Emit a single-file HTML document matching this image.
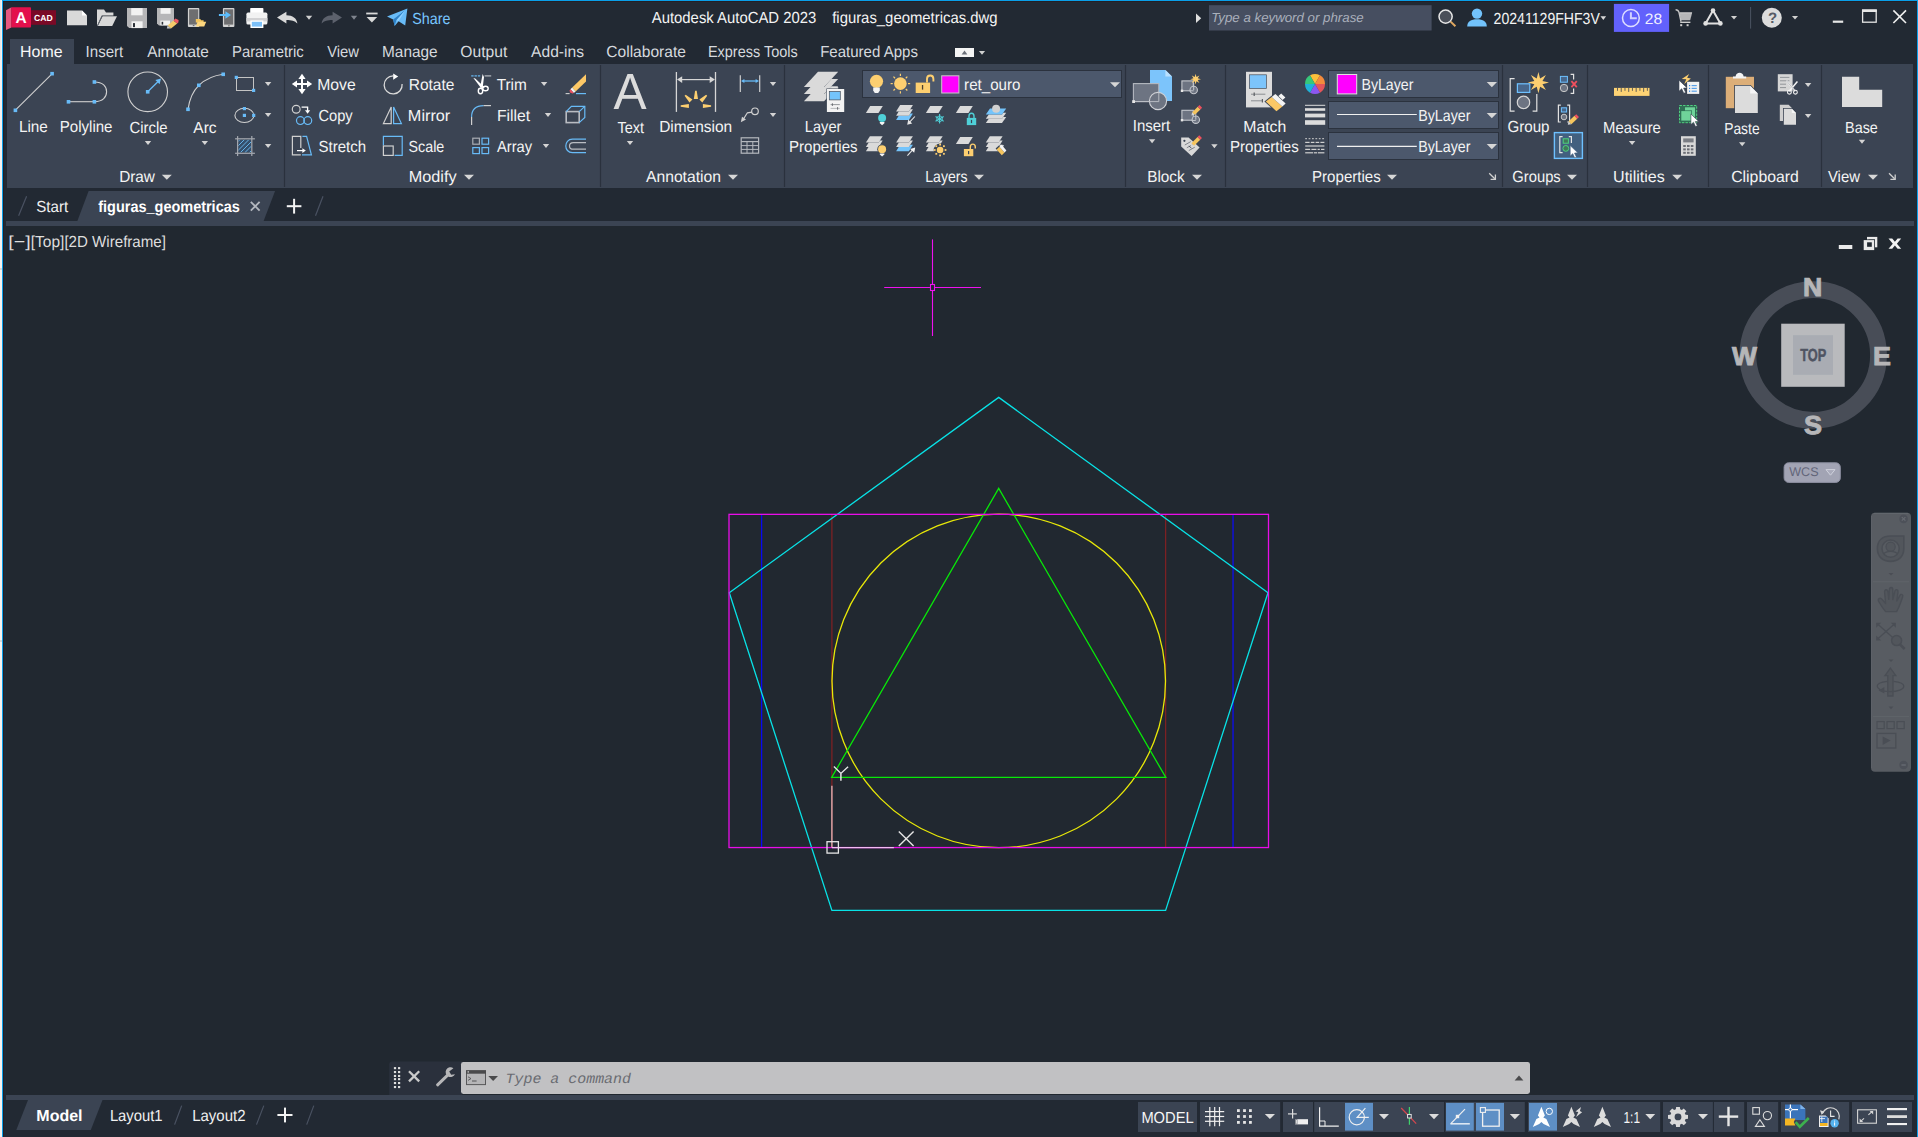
<!DOCTYPE html>
<html lang="en"><head><meta charset="utf-8"><title>Autodesk AutoCAD 2023 - figuras_geometricas.dwg</title>
<style>
html,body{margin:0;padding:0;background:#222933;overflow:hidden}
body{width:1918px;height:1137px}
svg{display:block;font-family:"Liberation Sans",sans-serif;text-rendering:geometricPrecision}
text{white-space:pre}
</style></head><body>
<svg width="1918" height="1137" viewBox="0 0 1918 1137">
<!-- s_frame -->
<rect x="0" y="0" width="1918" height="1137" fill="#222933"/>
<rect x="6" y="226" width="1908" height="869" fill="#212830"/>
<rect x="0" y="0" width="2" height="1137" fill="#f6f3f1"/>
<rect x="0" y="0" width="1" height="60" fill="#e8e8e8"/>
<rect x="0" y="268" width="2" height="2" fill="#d8d8d8"/>
<rect x="0" y="640" width="2" height="2" fill="#d8d8d8"/>
<rect x="2" y="0" width="1" height="1137" fill="#0a9fe8"/>
<rect x="3" y="1" width="1" height="1136" fill="#241f25"/>
<rect x="2" y="0" width="1916" height="1" fill="#0a9fe8"/>
<rect x="3" y="1" width="1914" height="1" fill="#241f25"/>
<rect x="1917" y="0" width="1" height="1137" fill="#0a9fe8"/>
<rect x="7" y="64" width="1906" height="124" fill="#3b4453"/>
<rect x="10" y="39" width="64" height="25" fill="#3b4453"/>
<rect x="6" y="221" width="1908" height="5" fill="#3b4453"/>
<path d="M88.6 191 L275.1 191 L263.6 221 L77.4 221 Z" fill="#3b4453"/>
<rect x="6" y="1095" width="1908" height="5" fill="#3b4453"/>
<path d="M28 1100 L102.5 1100 L90.8 1130 L16.3 1130 Z" fill="#3b4453"/>
<line x1="284.5" y1="65" x2="284.5" y2="187" stroke="#2a313d" stroke-width="1.2"/>
<line x1="600.5" y1="65" x2="600.5" y2="187" stroke="#2a313d" stroke-width="1.2"/>
<line x1="784.5" y1="65" x2="784.5" y2="187" stroke="#2a313d" stroke-width="1.2"/>
<line x1="1125.5" y1="65" x2="1125.5" y2="187" stroke="#2a313d" stroke-width="1.2"/>
<line x1="1225.5" y1="65" x2="1225.5" y2="187" stroke="#2a313d" stroke-width="1.2"/>
<line x1="1502.5" y1="65" x2="1502.5" y2="187" stroke="#2a313d" stroke-width="1.2"/>
<line x1="1587.5" y1="65" x2="1587.5" y2="187" stroke="#2a313d" stroke-width="1.2"/>
<line x1="1708.5" y1="65" x2="1708.5" y2="187" stroke="#2a313d" stroke-width="1.2"/>
<line x1="1821.5" y1="65" x2="1821.5" y2="187" stroke="#2a313d" stroke-width="1.2"/>
<!-- s_title -->
<path d="M6 10.2 L11.5 7.2 L11.5 27.4 L6 30 Z" fill="#e8587f"/>
<rect x="11.3" y="7.2" width="19.7" height="20.3" fill="#e3104c" rx="0.8"/>
<rect x="31" y="10.2" width="25" height="14.6" fill="#7a0926"/>
<text x="15.51" y="23.1" font-size="15.6" fill="#ffffff" textLength="11.19" lengthAdjust="spacingAndGlyphs" font-weight="bold">A</text>
<text x="34.05" y="20.7" font-size="8.8" fill="#ffffff" textLength="18.72" lengthAdjust="spacingAndGlyphs" font-weight="bold">CAD</text>
<path d="M67 10.4 L82 10.4 L87 15.4 L87 25.3 L67 25.3 Z" fill="#d9d9d9"/>
<path d="M82 10.4 L87 15.4 L82 15.4 Z" fill="#ffffff"/>
<path d="M97 9.6 L104 9.6 L106 12.4 L113.4 12.4 L113.4 15.6 L101.8 15.6 L97 26 Z" fill="#d9d9d9"/>
<path d="M102.6 16.2 L117 16.2 L112.2 26 L97.8 26 Z" fill="#d9d9d9"/>
<path d="M102 15.9 L97.4 26" fill="none" stroke="#6b6f78" stroke-width="0.9"/>
<path d="M127 8.1 L147 8.1 L147 28.1 L129.2 28.1 L127 25.9 Z" fill="#b6b6b8"/>
<rect x="131.2" y="8.1" width="11.4" height="7.2" fill="#f2f2f2"/>
<rect x="131.5" y="21.3" width="11.1" height="6.8" fill="#f2f2f2"/>
<rect x="133" y="23.1" width="2" height="4" fill="#2c3138"/>
<path d="M157 8.1 L174 8.1 L174 25.4 L159 25.4 L157 23.6 Z" fill="#b6b6b8"/>
<rect x="160.6" y="8.1" width="10" height="5.7" fill="#f2f2f2"/>
<rect x="160.4" y="20.6" width="9.6" height="4.8" fill="#f2f2f2"/>
<rect x="161.6" y="21.8" width="1.6" height="2.8" fill="#2c3138"/>
<path d="M173.4 20.4 L177.2 23.6 L171 28.4 L167.6 25.4 Z" fill="#f5cb6a"/>
<path d="M173.4 20.4 L175.4 18.6 L178.6 20 L178.4 22.6 L177.2 23.6 Z" fill="#ee5a66"/>
<path d="M167.6 25.4 L171 28.4 L166.8 28.6 Z" fill="#c8c8c8"/>
<rect x="187.9" y="8" width="11.4" height="18.9" fill="#d2d2d2" rx="0.9"/>
<rect x="189.1" y="9.3" width="9.1" height="15.3" fill="#6e6e70"/>
<rect x="192.8" y="25.2" width="1.6" height="0.9" fill="#555"/>
<path d="M195.8 18.9 L200.2 18.9 L201.2 20.2 L203.6 20.2 L203.6 22.4 L195.8 22.4 Z" fill="#f3c55c"/>
<path d="M197.6 21.8 L206.2 21.8 L204.2 26.6 L195.8 26.6 Z" fill="#fdd67e"/>
<rect x="222.9" y="8" width="11.5" height="18.9" fill="#d2d2d2" rx="0.9"/>
<rect x="224.1" y="9.3" width="9.1" height="15.3" fill="#6e6e70"/>
<rect x="228.2" y="25.4" width="1.4" height="0.9" fill="#444"/>
<path d="M218.9 14 L225.4 14 L225.4 11.3 L231 15 L225.4 18.7 L225.4 16 L218.9 16 Z" fill="#5cbcfb"/>
<rect x="250.2" y="7.9" width="13.2" height="5.7" fill="#ffffff" rx="0.8"/>
<rect x="246.4" y="12.6" width="21" height="12" fill="#f2f2f2" rx="1.6"/>
<rect x="246.4" y="18" width="21" height="3.4" fill="#d2d2d4"/>
<rect x="250.4" y="20.4" width="13" height="7.6" fill="#ffffff"/>
<rect x="251.8" y="21.8" width="10.2" height="4.8" fill="#7cc0f8"/>
<path d="M277 17.6 L286.4 11.8 L286.4 15.3 C292.6 15.3 296.8 18.3 297.4 23.6 C294.8 20.6 291.4 19.9 286.4 19.9 L286.4 23.5 Z" fill="#d9d9d9"/>
<path d="M305.8 15.8 L312.2 15.8 L309 19.8 Z" fill="#d0d0d0"/>
<path d="M342 17.6 L332.6 11.8 L332.6 15.3 C326.4 15.3 322.2 18.3 321.6 23.6 C324.2 20.6 327.6 19.9 332.6 19.9 L332.6 23.5 Z" fill="#5c616c"/>
<path d="M350.8 15.8 L357.2 15.8 L354 19.8 Z" fill="#7e838d"/>
<rect x="366.2" y="12.6" width="11.4" height="1.8" fill="#d9d9d9"/>
<path d="M366.6 17 L377.2 17 L371.9 22.4 Z" fill="#d9d9d9"/>
<path d="M387 16.4 L407.4 8.6 L405.2 25.6 L398.6 21.2 L394.6 26 L393.2 19.4 Z" fill="#68bbf7"/>
<path d="M393.2 19.4 L405.4 10 L396.4 20.2 L394.6 26 Z" fill="#2e7fc4"/>
<path d="M396.4 20.2 L405.4 10 L398.6 21.2 Z" fill="#8fd0ff"/>
<text x="412.25" y="24" font-size="16" fill="#78c6ff" textLength="38.19" lengthAdjust="spacingAndGlyphs">Share</text>
<text x="651.77" y="23" font-size="16" fill="#f4f4f4" textLength="164.48" lengthAdjust="spacingAndGlyphs">Autodesk AutoCAD 2023</text>
<text x="832.19" y="23" font-size="16" fill="#f4f4f4" textLength="165.37" lengthAdjust="spacingAndGlyphs">figuras_geometricas.dwg</text>
<path d="M1196 13.4 L1201.2 18.2 L1196 23 Z" fill="#e0e0e0"/>
<rect x="1209" y="5.2" width="222.6" height="25.3" fill="#464e60"/>
<text x="1211.22" y="22.4" font-size="13.2" fill="#aab0bc" textLength="152.47" lengthAdjust="spacingAndGlyphs" font-style="italic">Type a keyword or phrase</text>
<circle cx="1445.6" cy="16.6" r="6.6" fill="#4a4f59" stroke="#e6e6e6" stroke-width="1.5"/>
<line x1="1450.6" y1="21.6" x2="1455.4" y2="26.2" stroke="#e0a860" stroke-width="2"/>
<circle cx="1477" cy="13.6" r="5.2" fill="#72c2fb"/>
<path d="M1467.2 26.6 C1467.2 21.4 1471 19.2 1477 19.2 C1483 19.2 1486.8 21.4 1486.8 26.6 Z" fill="#72c2fb"/>
<text x="1493.6" y="24" font-size="16" fill="#f4f4f4" textLength="106.26" lengthAdjust="spacingAndGlyphs">20241129FHF3V</text>
<path d="M1600.5 16.3 L1606.1 16.3 L1603.3 19.9 Z" fill="#d9d9d9"/>
<rect x="1613.9" y="3.9" width="55.2" height="28" fill="#6261fc"/>
<circle cx="1630.9" cy="18" r="8.4" fill="none" stroke="#dedeff" stroke-width="1.5"/>
<path d="M1630.9 12.3 L1630.9 18.2 L1636.8 18.2" fill="none" stroke="#d2d2ff" stroke-width="2"/>
<text x="1644.71" y="24" font-size="15" fill="#f0f0ff" textLength="17.36" lengthAdjust="spacingAndGlyphs">28</text>
<path d="M1679.5 12.6 L1692.2 12.6 L1690.2 20.2 L1680.8 20.2 Z" fill="#b6b6b8"/>
<path d="M1679.5 12.9 L1692 12.9" fill="none" stroke="#cfcfcf" stroke-width="0.9"/>
<path d="M1675.6 9.8 C1677.6 9.8 1678.4 10.6 1679 12.4 L1681 21.6" fill="none" stroke="#c6c6c6" stroke-width="1.4"/>
<rect x="1680.2" y="21.6" width="10.2" height="1.4" fill="#cfcfcf"/>
<rect x="1680.2" y="24.2" width="2" height="2" fill="#cfcfcf"/>
<rect x="1686.6" y="24.2" width="2" height="2" fill="#cfcfcf"/>
<path d="M1713 10.6 L1705.6 23.6 L1720.4 23.6 L1713 10.6" fill="none" stroke="#e0e0e0" stroke-width="2" stroke-linejoin="round"/>
<circle cx="1713" cy="10.6" r="2.3" fill="#e0e0e0"/>
<circle cx="1705.6" cy="23.4" r="2.3" fill="#e0e0e0"/>
<circle cx="1720.4" cy="23.4" r="2.3" fill="#e0e0e0"/>
<path d="M1730.9 16 L1737.1 16 L1734 19.6 Z" fill="#d0d0d0"/>
<line x1="1750.6" y1="7" x2="1750.6" y2="28.6" stroke="#4a5262" stroke-width="1"/>
<circle cx="1771.8" cy="17.8" r="10" fill="#dcdcdc"/>
<text x="1768" y="23.2" font-size="15" fill="#565b66" font-weight="bold">?</text>
<path d="M1791.9 16 L1798.1 16 L1795 19.6 Z" fill="#d0d0d0"/>
<rect x="1832.8" y="20.6" width="10.4" height="2.2" fill="#e6e6e6"/>
<rect x="1862.6" y="10.2" width="13.6" height="12" fill="none" stroke="#e6e6e6" stroke-width="1.3"/>
<rect x="1862" y="9.4" width="14.8" height="2.6" fill="#e6e6e6"/>
<line x1="1893.4" y1="10.4" x2="1906" y2="23" stroke="#f0f0f0" stroke-width="1.6"/>
<line x1="1906" y1="10.4" x2="1893.4" y2="23" stroke="#f0f0f0" stroke-width="1.6"/>
<text x="20.1" y="57" font-size="16" fill="#f8f8f8" textLength="42.41" lengthAdjust="spacingAndGlyphs">Home</text>
<text x="85.61" y="57" font-size="16" fill="#d6d9de" textLength="37.7" lengthAdjust="spacingAndGlyphs">Insert</text>
<text x="147.37" y="57" font-size="16" fill="#d6d9de" textLength="61.51" lengthAdjust="spacingAndGlyphs">Annotate</text>
<text x="231.98" y="57" font-size="16" fill="#d6d9de" textLength="71.81" lengthAdjust="spacingAndGlyphs">Parametric</text>
<text x="327.14" y="57" font-size="16" fill="#d6d9de" textLength="31.83" lengthAdjust="spacingAndGlyphs">View</text>
<text x="382.04" y="57" font-size="16" fill="#d6d9de" textLength="55.65" lengthAdjust="spacingAndGlyphs">Manage</text>
<text x="460.36" y="57" font-size="16" fill="#d6d9de" textLength="46.96" lengthAdjust="spacingAndGlyphs">Output</text>
<text x="531.07" y="57" font-size="16" fill="#d6d9de" textLength="52.89" lengthAdjust="spacingAndGlyphs">Add-ins</text>
<text x="606.31" y="57" font-size="16" fill="#d6d9de" textLength="79.58" lengthAdjust="spacingAndGlyphs">Collaborate</text>
<text x="707.94" y="57" font-size="16" fill="#d6d9de" textLength="89.77" lengthAdjust="spacingAndGlyphs">Express Tools</text>
<text x="820.18" y="57" font-size="16" fill="#d6d9de" textLength="97.76" lengthAdjust="spacingAndGlyphs">Featured Apps</text>
<rect x="955" y="48" width="19" height="9" fill="#f4f4f4"/>
<path d="M961.6 54.6 L967.4 54.6 L964.5 50.6 Z" fill="#6a6f78"/>
<path d="M978.9 51 L985.1 51 L982 54.8 Z" fill="#d0d0d0"/>
<!-- s_ribbon_text -->
<rect x="862.5" y="70.5" width="259" height="27" fill="#4c586c" stroke="#2b323e" stroke-width="1"/>
<rect x="1328.5" y="70.5" width="170" height="27" fill="#4c586c" stroke="#2b323e" stroke-width="1"/>
<rect x="1328.5" y="101.5" width="170" height="27" fill="#4c586c" stroke="#2b323e" stroke-width="1"/>
<rect x="1328.5" y="132.5" width="170" height="27" fill="#4c586c" stroke="#2b323e" stroke-width="1"/>
<text x="18.94" y="132" font-size="16" fill="#f4f4f4" textLength="28.94" lengthAdjust="spacingAndGlyphs">Line</text>
<text x="59.77" y="132" font-size="16" fill="#f4f4f4" textLength="52.7" lengthAdjust="spacingAndGlyphs">Polyline</text>
<text x="129.44" y="133" font-size="16" fill="#f4f4f4" textLength="38.02" lengthAdjust="spacingAndGlyphs">Circle</text>
<text x="193.37" y="133" font-size="16" fill="#f4f4f4" textLength="23.24" lengthAdjust="spacingAndGlyphs">Arc</text>
<text x="119.14" y="182" font-size="16" fill="#f4f4f4" textLength="35.82" lengthAdjust="spacingAndGlyphs">Draw</text>
<text x="317.21" y="90" font-size="16" fill="#f4f4f4" textLength="38.49" lengthAdjust="spacingAndGlyphs">Move</text>
<text x="318.45" y="121" font-size="16" fill="#f4f4f4" textLength="34.27" lengthAdjust="spacingAndGlyphs">Copy</text>
<text x="318.52" y="152" font-size="16" fill="#f4f4f4" textLength="47.45" lengthAdjust="spacingAndGlyphs">Stretch</text>
<text x="408.73" y="90" font-size="16" fill="#f4f4f4" textLength="45.66" lengthAdjust="spacingAndGlyphs">Rotate</text>
<text x="407.87" y="121" font-size="16" fill="#f4f4f4" textLength="42.4" lengthAdjust="spacingAndGlyphs">Mirror</text>
<text x="408.55" y="152" font-size="16" fill="#f4f4f4" textLength="35.79" lengthAdjust="spacingAndGlyphs">Scale</text>
<text x="408.67" y="182" font-size="16" fill="#f4f4f4" textLength="47.86" lengthAdjust="spacingAndGlyphs">Modify</text>
<text x="496.66" y="90" font-size="16" fill="#f4f4f4" textLength="30.13" lengthAdjust="spacingAndGlyphs">Trim</text>
<text x="497.01" y="121" font-size="16" fill="#f4f4f4" textLength="33.1" lengthAdjust="spacingAndGlyphs">Fillet</text>
<text x="496.97" y="152" font-size="16" fill="#f4f4f4" textLength="35.16" lengthAdjust="spacingAndGlyphs">Array</text>
<text x="617.49" y="133" font-size="16" fill="#f4f4f4" textLength="26.61" lengthAdjust="spacingAndGlyphs">Text</text>
<text x="659.13" y="132" font-size="16" fill="#f4f4f4" textLength="73.07" lengthAdjust="spacingAndGlyphs">Dimension</text>
<text x="645.97" y="182" font-size="16" fill="#f4f4f4" textLength="75.05" lengthAdjust="spacingAndGlyphs">Annotation</text>
<text x="804.8" y="132" font-size="16" fill="#f4f4f4" textLength="36.64" lengthAdjust="spacingAndGlyphs">Layer</text>
<text x="788.96" y="152" font-size="16" fill="#f4f4f4" textLength="68.68" lengthAdjust="spacingAndGlyphs">Properties</text>
<text x="964.1" y="90" font-size="16" fill="#f4f4f4" textLength="56.34" lengthAdjust="spacingAndGlyphs">ret_ouro</text>
<text x="925.24" y="182" font-size="16" fill="#f4f4f4" textLength="42.26" lengthAdjust="spacingAndGlyphs">Layers</text>
<text x="1132.72" y="131" font-size="16" fill="#f4f4f4" textLength="37.49" lengthAdjust="spacingAndGlyphs">Insert</text>
<text x="1147.24" y="182" font-size="16" fill="#f4f4f4" textLength="37.43" lengthAdjust="spacingAndGlyphs">Block</text>
<text x="1243.31" y="132" font-size="16" fill="#f4f4f4" textLength="42.92" lengthAdjust="spacingAndGlyphs">Match</text>
<text x="1230.06" y="152" font-size="16" fill="#f4f4f4" textLength="68.68" lengthAdjust="spacingAndGlyphs">Properties</text>
<text x="1361.44" y="90" font-size="16" fill="#f4f4f4" textLength="52" lengthAdjust="spacingAndGlyphs">ByLayer</text>
<text x="1418.23" y="121" font-size="16" fill="#f4f4f4" textLength="52.2" lengthAdjust="spacingAndGlyphs">ByLayer</text>
<text x="1418.23" y="152" font-size="16" fill="#f4f4f4" textLength="52.2" lengthAdjust="spacingAndGlyphs">ByLayer</text>
<text x="1312.06" y="182" font-size="16" fill="#f4f4f4" textLength="68.68" lengthAdjust="spacingAndGlyphs">Properties</text>
<text x="1507.44" y="132" font-size="16" fill="#f4f4f4" textLength="42.1" lengthAdjust="spacingAndGlyphs">Group</text>
<text x="1512.36" y="182" font-size="16" fill="#f4f4f4" textLength="48.37" lengthAdjust="spacingAndGlyphs">Groups</text>
<text x="1603.08" y="133" font-size="16" fill="#f4f4f4" textLength="57.78" lengthAdjust="spacingAndGlyphs">Measure</text>
<text x="1613.06" y="182" font-size="16" fill="#f4f4f4" textLength="51.72" lengthAdjust="spacingAndGlyphs">Utilities</text>
<text x="1724.16" y="134" font-size="16" fill="#f4f4f4" textLength="35.45" lengthAdjust="spacingAndGlyphs">Paste</text>
<text x="1731.2" y="182" font-size="16" fill="#f4f4f4" textLength="67.62" lengthAdjust="spacingAndGlyphs">Clipboard</text>
<text x="1845.12" y="133" font-size="16" fill="#f4f4f4" textLength="32.72" lengthAdjust="spacingAndGlyphs">Base</text>
<text x="1827.94" y="182" font-size="16" fill="#f4f4f4" textLength="31.93" lengthAdjust="spacingAndGlyphs">View</text>
<path d="M161.8 174.8 L171.8 174.8 L166.8 179.8 Z" fill="#d6d6d6"/>
<path d="M464 174.8 L474 174.8 L469 179.8 Z" fill="#d6d6d6"/>
<path d="M728 174.8 L738 174.8 L733 179.8 Z" fill="#d6d6d6"/>
<path d="M974 174.8 L984 174.8 L979 179.8 Z" fill="#d6d6d6"/>
<path d="M1192 174.8 L1202 174.8 L1197 179.8 Z" fill="#d6d6d6"/>
<path d="M1387 174.8 L1397 174.8 L1392 179.8 Z" fill="#d6d6d6"/>
<path d="M1567 174.8 L1577 174.8 L1572 179.8 Z" fill="#d6d6d6"/>
<path d="M1672.2 174.8 L1682.2 174.8 L1677.2 179.8 Z" fill="#d6d6d6"/>
<path d="M1868 174.8 L1878 174.8 L1873 179.8 Z" fill="#d6d6d6"/>
<path d="M1489.2 173.2 L1494.8 178.8" fill="none" stroke="#d0d0d0" stroke-width="1.3"/>
<path d="M1495.4 174.6 L1495.4 179.4 L1490.6 179.4" fill="none" stroke="#d0d0d0" stroke-width="1.3"/>
<path d="M1889 173.2 L1894.6 178.8" fill="none" stroke="#d0d0d0" stroke-width="1.3"/>
<path d="M1895.2 174.6 L1895.2 179.4 L1890.4 179.4" fill="none" stroke="#d0d0d0" stroke-width="1.3"/>
<path d="M144.8 141 L151.2 141 L148 145 Z" fill="#d4d4d4"/>
<path d="M201.6 141 L208 141 L204.8 145 Z" fill="#d4d4d4"/>
<path d="M626.8 141 L633.2 141 L630 145 Z" fill="#d4d4d4"/>
<path d="M1148.9 139.2 L1155.3 139.2 L1152.1 143.2 Z" fill="#d4d4d4"/>
<path d="M1628.9 141 L1635.3 141 L1632.1 145 Z" fill="#d4d4d4"/>
<path d="M1739 142.2 L1745.4 142.2 L1742.2 146.2 Z" fill="#d4d4d4"/>
<path d="M1858.8 139.8 L1865.2 139.8 L1862 143.8 Z" fill="#d4d4d4"/>
<path d="M264.9 82 L271.3 82 L268.1 86 Z" fill="#d4d4d4"/>
<path d="M264.9 113 L271.3 113 L268.1 117 Z" fill="#d4d4d4"/>
<path d="M264.9 144 L271.3 144 L268.1 148 Z" fill="#d4d4d4"/>
<path d="M540.9 82 L547.3 82 L544.1 86 Z" fill="#d4d4d4"/>
<path d="M544.8 113 L551.2 113 L548 117 Z" fill="#d4d4d4"/>
<path d="M542.8 144 L549.2 144 L546 148 Z" fill="#d4d4d4"/>
<path d="M769.8 82 L776.2 82 L773 86 Z" fill="#d4d4d4"/>
<path d="M769.8 113 L776.2 113 L773 117 Z" fill="#d4d4d4"/>
<path d="M1211.2 144.2 L1217.6 144.2 L1214.4 148.2 Z" fill="#d4d4d4"/>
<path d="M1804.9 83 L1811.3 83 L1808.1 87 Z" fill="#d4d4d4"/>
<path d="M1804.9 114 L1811.3 114 L1808.1 118 Z" fill="#d4d4d4"/>
<path d="M1110 82.3 L1120 82.3 L1115 87.2 Z" fill="#d6d6d6"/>
<path d="M1486.7 81.9 L1497 81.9 L1491.85 87.3 Z" fill="#d6d6d6"/>
<path d="M1486.7 112.9 L1497 112.9 L1491.85 118.3 Z" fill="#d6d6d6"/>
<path d="M1486.7 143.9 L1497 143.9 L1491.85 149.3 Z" fill="#d6d6d6"/>
<rect x="941.7" y="75.8" width="17.2" height="17.2" fill="#ff00ff" stroke="#c8c8c8" stroke-width="1"/>
<rect x="1337.3" y="74.5" width="19.4" height="19.4" fill="#ff00ff" stroke="#e0e0e0" stroke-width="1"/>
<line x1="1337" y1="114.5" x2="1416.8" y2="114.5" stroke="#f0f0f0" stroke-width="1.2"/>
<line x1="1337" y1="146.4" x2="1416.8" y2="146.4" stroke="#f0f0f0" stroke-width="1.2"/>
<!-- s_draw -->
<line x1="15.4" y1="110.2" x2="52" y2="73.8" stroke="#d0d0d0" stroke-width="1.1"/>
<rect x="13.6" y="108.5" width="3.6" height="3.6" fill="#68bbf7"/>
<rect x="50.3" y="71.9" width="3.6" height="3.6" fill="#68bbf7"/>
<line x1="68.5" y1="101.7" x2="94.4" y2="101.7" stroke="#d0d0d0" stroke-width="1.1"/>
<path d="M94.4 82 C103 82 106.6 86.6 106.6 91.8 C106.6 97 103 101.7 94.4 101.7" fill="none" stroke="#d0d0d0" stroke-width="1.1"/>
<rect x="66.7" y="100" width="3.6" height="3.6" fill="#68bbf7"/>
<rect x="92.6" y="100" width="3.6" height="3.6" fill="#68bbf7"/>
<rect x="92.6" y="80.2" width="3.6" height="3.6" fill="#68bbf7"/>
<circle cx="147.7" cy="91.8" r="19.8" fill="none" stroke="#d0d0d0" stroke-width="1.1"/>
<line x1="147.7" y1="91.8" x2="158.4" y2="81.2" stroke="#68bbf7" stroke-width="1.3"/>
<path d="M161 78.6 L159.6 84.2 L155.4 80 Z" fill="#68bbf7"/>
<rect x="145.9" y="90" width="3.6" height="3.6" fill="#68bbf7"/>
<path d="M188 109.4 C189.6 97.6 193.6 90.4 198.8 85.3 C205 79.6 213 75.6 223.2 74.3" fill="none" stroke="#d0d0d0" stroke-width="1.1"/>
<rect x="186.2" y="107.5" width="3.6" height="3.6" fill="#68bbf7"/>
<rect x="197" y="83.5" width="3.6" height="3.6" fill="#68bbf7"/>
<rect x="221.4" y="72.5" width="3.6" height="3.6" fill="#68bbf7"/>
<rect x="236.5" y="77.5" width="17" height="13" fill="none" stroke="#c4c4c4" stroke-width="1"/>
<rect x="234.7" y="75.8" width="3.2" height="3.2" fill="#68bbf7"/>
<rect x="252" y="88.8" width="3.2" height="3.2" fill="#68bbf7"/>
<ellipse cx="244.4" cy="115.4" rx="9.5" ry="7.1" fill="none" stroke="#d0d0d0" stroke-width="1.1"/>
<rect x="242.8" y="107" width="3.2" height="3.2" fill="#68bbf7"/>
<rect x="242.8" y="113.8" width="3.2" height="3.2" fill="#68bbf7"/>
<rect x="252.1" y="113.8" width="3.2" height="3.2" fill="#68bbf7"/>
<clipPath id="hc"><rect x="238.4" y="139.6" width="12.6" height="12.9"/></clipPath>
<g clip-path="url(#hc)">
<rect x="238.4" y="139.6" width="12.6" height="12.9" fill="#344f6c"/>
<line x1="226.9" y1="152.6" x2="239.9" y2="139.6" stroke="#6cbdf6" stroke-width="0.9"/>
<line x1="231.4" y1="152.6" x2="244.4" y2="139.6" stroke="#6cbdf6" stroke-width="0.9"/>
<line x1="235.9" y1="152.6" x2="248.9" y2="139.6" stroke="#6cbdf6" stroke-width="0.9"/>
<line x1="240.4" y1="152.6" x2="253.4" y2="139.6" stroke="#6cbdf6" stroke-width="0.9"/>
<line x1="244.9" y1="152.6" x2="257.9" y2="139.6" stroke="#6cbdf6" stroke-width="0.9"/>
<line x1="249.4" y1="152.6" x2="262.4" y2="139.6" stroke="#6cbdf6" stroke-width="0.9"/>
</g>
<line x1="237.6" y1="136.1" x2="237.6" y2="156" stroke="#a3a7ae" stroke-width="1.25"/>
<line x1="251.8" y1="136.1" x2="251.8" y2="156" stroke="#a3a7ae" stroke-width="1.25"/>
<line x1="235.1" y1="138.8" x2="254.9" y2="138.8" stroke="#a3a7ae" stroke-width="1.25"/>
<line x1="235.1" y1="153.3" x2="254.9" y2="153.3" stroke="#a3a7ae" stroke-width="1.25"/>
<!-- s_modify -->
<rect x="301" y="77" width="2" height="14" fill="#ffffff"/>
<rect x="295" y="83" width="14" height="2" fill="#ffffff"/>
<path d="M302 73.8 L305.6 79 L298.4 79 Z" fill="#ffffff"/>
<path d="M302 94.2 L305.6 89 L298.4 89 Z" fill="#ffffff"/>
<path d="M291.8 84 L297 80.4 L297 87.6 Z" fill="#ffffff"/>
<path d="M312.2 84 L307 80.4 L307 87.6 Z" fill="#ffffff"/>
<circle cx="296.2" cy="109.3" r="3.9" fill="none" stroke="#d0d0d0" stroke-width="1.2"/>
<circle cx="300.4" cy="120.6" r="3.9" fill="none" stroke="#68bbf7" stroke-width="1.2"/>
<circle cx="307.8" cy="120.6" r="3.9" fill="none" stroke="#68bbf7" stroke-width="1.2"/>
<path d="M301.6 107.2 L307.6 107.2 L307.6 111.2" fill="none" stroke="#ffffff" stroke-width="1.3"/>
<path d="M305 110.2 L310.2 110.2 L307.6 113.8 Z" fill="#ffffff"/>
<path d="M300.8 154.9 L292.4 154.9 L292.4 136.4 L300.8 136.4 L300.8 148" fill="none" stroke="#d0d0d0" stroke-width="1.2"/>
<path d="M302.4 136.4 L306.6 136.4 L311.4 154.9 L302 154.9" fill="none" stroke="#68bbf7" stroke-width="1.2"/>
<line x1="297" y1="150.6" x2="303" y2="150.6" stroke="#ffffff" stroke-width="1.2"/>
<path d="M302.4 148.2 L305.8 150.6 L302.4 153 Z" fill="#ffffff"/>
<path d="M402.1 84 A9 9 0 1 1 393.2 75.9" fill="none" stroke="#dadada" stroke-width="1.3"/>
<path d="M393.2 73.6 L398.2 76.6 L393.2 79.8 Z" fill="#ffffff"/>
<path d="M391.2 107 L391.2 123.6 L383.4 123.6 Z" fill="none" stroke="#d0d0d0" stroke-width="1.2"/>
<path d="M393.6 107 L401.4 123.6 L393.6 123.6 Z" fill="none" stroke="#68bbf7" stroke-width="1.2"/>
<path d="M383.4 145.4 L383.4 136.4 L402.2 136.4 L402.2 155.4 L394.6 155.4" fill="none" stroke="#68bbf7" stroke-width="1.2"/>
<rect x="383.4" y="146" width="9.8" height="9.4" fill="none" stroke="#d0d0d0" stroke-width="1.2"/>
<line x1="471.2" y1="75.9" x2="473.6" y2="75.9" stroke="#68bbf7" stroke-width="1.2"/>
<line x1="474.5" y1="75.9" x2="476.9" y2="75.9" stroke="#68bbf7" stroke-width="1.2"/>
<line x1="477.8" y1="75.9" x2="480.2" y2="75.9" stroke="#68bbf7" stroke-width="1.2"/>
<line x1="484.6" y1="75.9" x2="491.2" y2="75.9" stroke="#b9bcc2" stroke-width="1.2"/>
<path d="M473.4 78 L475.2 78.4 L484.6 87.2 L482.4 88.6 L480.2 87 Z" fill="#ffffff"/>
<path d="M482.6 74 L484 77 L482.8 86.6 L480.4 88.2 L480.6 85 Z" fill="#ffffff"/>
<ellipse cx="480.5" cy="91" rx="2.2" ry="2.7" fill="none" stroke="#ffffff" stroke-width="1.4"/>
<ellipse cx="485.5" cy="88.5" rx="2.7" ry="2.2" fill="none" stroke="#ffffff" stroke-width="1.4"/>
<path d="M471.6 117 C471.6 110 475.4 105.6 483.6 105.6" fill="none" stroke="#68bbf7" stroke-width="1.2"/>
<line x1="483.6" y1="105.6" x2="491" y2="105.6" stroke="#d0d0d0" stroke-width="1.2"/>
<line x1="471.6" y1="117" x2="471.6" y2="125" stroke="#d0d0d0" stroke-width="1.2"/>
<rect x="472.8" y="138.2" width="6.6" height="6" fill="none" stroke="#a9adb4" stroke-width="1.2"/>
<rect x="482" y="138.2" width="6.6" height="6" fill="none" stroke="#68bbf7" stroke-width="1.2"/>
<rect x="472.8" y="147.6" width="6.6" height="6" fill="none" stroke="#68bbf7" stroke-width="1.2"/>
<rect x="482" y="147.6" width="6.6" height="6" fill="none" stroke="#68bbf7" stroke-width="1.2"/>
<path d="M586 74.2 L586 81.6 L575.6 91.4 L572.2 87.6 Z" fill="#fdc866"/>
<path d="M572.2 87.6 L575.6 91.4 L573.8 93 L570.4 89.2 Z" fill="#f2f2f2"/>
<path d="M570.4 89.2 L573.8 93 L572.6 93.6 L570 92.6 L569.6 90.4 Z" fill="#ee4f5e"/>
<line x1="565.6" y1="93.6" x2="569.6" y2="93.6" stroke="#d0d0d0" stroke-width="1.1"/>
<line x1="576" y1="93.6" x2="586" y2="93.6" stroke="#68bbf7" stroke-width="1.2"/>
<rect x="566.2" y="111.6" width="13" height="11" fill="none" stroke="#b9bcc2" stroke-width="1.6"/>
<path d="M566.2 111.6 L571.4 106.4 L584.8 106.4 L584.8 117.4 L579.2 122.6" fill="none" stroke="#68bbf7" stroke-width="1.2"/>
<line x1="579.2" y1="111.6" x2="584.8" y2="106.4" stroke="#68bbf7" stroke-width="1.2"/>
<path d="M586 139.2 L572.4 139.2 C563.6 139.2 563.6 152.6 572.4 152.6 L586 152.6" fill="none" stroke="#68bbf7" stroke-width="1.2"/>
<path d="M586 142.6 L573.4 142.6 C568.2 142.6 568.2 149.2 573.4 149.2 L586 149.2" fill="none" stroke="#b9bcc2" stroke-width="1.2"/>
<!-- s_annot -->
<text x="613.6" y="109.2" font-size="51" fill="#dcdcdc" textLength="33.09" lengthAdjust="spacingAndGlyphs">A</text>
<line x1="676.4" y1="72" x2="676.4" y2="111.9" stroke="#d6d6d6" stroke-width="1.3"/>
<line x1="715.5" y1="72" x2="715.5" y2="111.9" stroke="#d6d6d6" stroke-width="1.3"/>
<line x1="680" y1="79.6" x2="712" y2="79.6" stroke="#d6d6d6" stroke-width="1.2"/>
<path d="M677 79.6 L682.2 76.3 L682.2 82.9 Z" fill="#d6d6d6"/>
<path d="M714.9 79.6 L709.7 76.3 L709.7 82.9 Z" fill="#d6d6d6"/>
<path d="M702.9 108.1 L711.1 106.8 L711.1 105.2 L702.9 103.9 Z" fill="#fdcf70"/>
<path d="M702.33 102.54 L707.21 95.82 L706.08 94.69 L699.36 99.57 Z" fill="#fdcf70"/>
<path d="M698 99 L696.7 90.8 L695.1 90.8 L693.8 99 Z" fill="#fdcf70"/>
<path d="M692.44 99.57 L685.72 94.69 L684.59 95.82 L689.47 102.54 Z" fill="#fdcf70"/>
<path d="M688.9 103.9 L680.7 105.2 L680.7 106.8 L688.9 108.1 Z" fill="#fdcf70"/>
<line x1="740.3" y1="75.2" x2="740.3" y2="92" stroke="#d0d0d0" stroke-width="1.2"/>
<line x1="759.7" y1="75.2" x2="759.7" y2="92" stroke="#d0d0d0" stroke-width="1.2"/>
<line x1="743" y1="81" x2="757" y2="81" stroke="#68bbf7" stroke-width="1.3"/>
<path d="M741 81 L744.4 79 L744.4 83 Z" fill="#68bbf7"/>
<path d="M759 81 L755.6 79 L755.6 83 Z" fill="#68bbf7"/>
<circle cx="755" cy="111.3" r="3.3" fill="none" stroke="#d0d0d0" stroke-width="1.2"/>
<path d="M752 112.2 L747.4 112.8 L743 119.8" fill="none" stroke="#d0d0d0" stroke-width="1.2"/>
<path d="M740.8 122.2 L742 116.8 L746 119.6 Z" fill="#d0d0d0"/>
<rect x="741.2" y="137.8" width="17.4" height="15.4" fill="none" stroke="#b5b8be" stroke-width="1.2"/>
<line x1="741.2" y1="141.6" x2="758.6" y2="141.6" stroke="#b5b8be" stroke-width="1.2"/>
<line x1="741.2" y1="145.6" x2="758.6" y2="145.6" stroke="#b5b8be" stroke-width="1"/>
<line x1="741.2" y1="149.4" x2="758.6" y2="149.4" stroke="#b5b8be" stroke-width="1"/>
<line x1="747" y1="141.6" x2="747" y2="153.2" stroke="#b5b8be" stroke-width="1"/>
<line x1="752.8" y1="141.6" x2="752.8" y2="153.2" stroke="#b5b8be" stroke-width="1"/>
<!-- s_layers -->
<path d="M818 84.9 L838.6 84.9 L824.3 101.2 L803.7 101.2 Z" fill="#3b4453"/>
<path d="M818 86.2 L838.2 86.2 L824.1 101.2 L803.9 101.2 Z" fill="#dadada"/>
<path d="M818 77.7 L838.6 77.7 L824.3 94 L803.7 94 Z" fill="#3b4453"/>
<path d="M818 79 L838.2 79 L824.1 94 L803.9 94 Z" fill="#dadada"/>
<path d="M818 70.5 L838.6 70.5 L824.3 87.1 L803.7 87.1 Z" fill="#3b4453"/>
<path d="M818 71.8 L838.2 71.8 L824.1 87.1 L803.9 87.1 Z" fill="#dadada"/>
<rect x="831.8" y="87.1" width="6.4" height="2.3" fill="#e4e4e4"/>
<rect x="826.4" y="88.5" width="18.2" height="23.9" fill="#3b4453"/>
<rect x="826.9" y="89" width="17.3" height="23" fill="#f3f3f3"/>
<rect x="829.3" y="91.4" width="11" height="8.5" fill="#74c4fb" stroke="#4a4f58" stroke-width="0.7"/>
<line x1="830.6" y1="104.6" x2="839.8" y2="104.6" stroke="#8a8d92" stroke-width="0.9"/>
<line x1="832.4" y1="103.3" x2="832.4" y2="105.9" stroke="#6a6d72" stroke-width="1"/>
<line x1="830.6" y1="108.4" x2="839.8" y2="108.4" stroke="#b0b2b6" stroke-width="0.9"/>
<line x1="837.6" y1="107.1" x2="837.6" y2="109.7" stroke="#6a6d72" stroke-width="1"/>
<circle cx="876.5" cy="81.3" r="6.6" fill="#fdcf70"/>
<path d="M873.2 87.6 L879.8 87.6 L879.8 90.6 L878.2 93 L874.8 93 L873.2 90.6 Z" fill="#f4f4f4"/>
<circle cx="900.4" cy="83.6" r="6.3" fill="#fdcf70"/>
<line x1="908" y1="83.6" x2="910.2" y2="83.6" stroke="#fdcf70" stroke-width="1.2"/>
<line x1="905.77" y1="88.97" x2="907.33" y2="90.53" stroke="#fdcf70" stroke-width="1.2"/>
<line x1="900.4" y1="91.2" x2="900.4" y2="93.4" stroke="#fdcf70" stroke-width="1.2"/>
<line x1="895.03" y1="88.97" x2="893.47" y2="90.53" stroke="#fdcf70" stroke-width="1.2"/>
<line x1="892.8" y1="83.6" x2="890.6" y2="83.6" stroke="#fdcf70" stroke-width="1.2"/>
<line x1="895.03" y1="78.23" x2="893.47" y2="76.67" stroke="#fdcf70" stroke-width="1.2"/>
<line x1="900.4" y1="76" x2="900.4" y2="73.8" stroke="#fdcf70" stroke-width="1.2"/>
<line x1="905.77" y1="78.23" x2="907.33" y2="76.67" stroke="#fdcf70" stroke-width="1.2"/>
<rect x="915.7" y="82.6" width="14.4" height="10.4" fill="#fdcf70"/>
<path d="M927 82.6 L927 79 C927 74.4 933.4 74.4 933.4 79 L933.4 81.6" fill="none" stroke="#fdcf70" stroke-width="1.9"/>
<rect x="921.9" y="85" width="1.3" height="4.6" fill="#4a4030"/>
<path d="M870.2 106.1 L882.8 106.1 L878.5 113 L865.9 113 Z" fill="#dadada"/>
<circle cx="882.1" cy="117.9" r="4" fill="#4fd0d8"/>
<path d="M879.8 122.1 L884.4 122.1 L884.4 123.3 L882.1 125.3 L879.8 123.3 Z" fill="#f4f4f4"/>
<path d="M899.8 112.3 L913.3 112.3 L908.9 120 L896.1 120 Z" fill="#3b4453"/>
<path d="M900.1 113.6 L912.9 113.6 L908.9 120 L896.1 120 Z" fill="#74c4fb"/>
<path d="M899.8 108 L913.3 108 L908.9 115.7 L896.1 115.7 Z" fill="#3b4453"/>
<path d="M900.1 109.3 L912.9 109.3 L908.9 115.7 L896.1 115.7 Z" fill="#dadada"/>
<path d="M899.8 103.7 L913.3 103.7 L908.9 111.4 L896.1 111.4 Z" fill="#3b4453"/>
<path d="M900.1 105 L912.9 105 L908.9 111.4 L896.1 111.4 Z" fill="#dadada"/>
<line x1="914.9" y1="116.5" x2="909.6" y2="122.2" stroke="#e6e6e6" stroke-width="1.1"/>
<path d="M907.2 124.8 L908.2 119.6 L912.2 123.4 Z" fill="#e6e6e6"/>
<path d="M930.2 106.1 L942.8 106.1 L938.5 113 L925.9 113 Z" fill="#dadada"/>
<line x1="939.6" y1="123.5" x2="939.6" y2="114.1" stroke="#4fd0d8" stroke-width="1.1"/>
<line x1="935.53" y1="121.15" x2="943.67" y2="116.45" stroke="#4fd0d8" stroke-width="1.1"/>
<line x1="935.53" y1="116.45" x2="943.67" y2="121.15" stroke="#4fd0d8" stroke-width="1.1"/>
<line x1="942.28" y1="120.35" x2="939.6" y2="121.9" stroke="#4fd0d8" stroke-width="0.9"/>
<line x1="939.6" y1="121.9" x2="936.92" y2="120.35" stroke="#4fd0d8" stroke-width="0.9"/>
<line x1="936.92" y1="120.35" x2="936.92" y2="117.25" stroke="#4fd0d8" stroke-width="0.9"/>
<line x1="936.92" y1="117.25" x2="939.6" y2="115.7" stroke="#4fd0d8" stroke-width="0.9"/>
<line x1="939.6" y1="115.7" x2="942.28" y2="117.25" stroke="#4fd0d8" stroke-width="0.9"/>
<line x1="942.28" y1="117.25" x2="942.28" y2="120.35" stroke="#4fd0d8" stroke-width="0.9"/>
<path d="M960.2 106.1 L972.8 106.1 L968.5 113 L955.9 113 Z" fill="#dadada"/>
<rect x="966.8" y="117.9" width="9.4" height="7.2" fill="#4fd0d8"/>
<path d="M969 117.9 L969 116.1 C969 112.3 974 112.3 974 116.1 L974 117.9" fill="none" stroke="#4fd0d8" stroke-width="1.4"/>
<rect x="970.9" y="119.9" width="1.2" height="3.2" fill="#3b4453"/>
<path d="M989.7 115.7 L1006.6 115.7 L1002 123 L985.8 123 Z" fill="#3b4453"/>
<path d="M990 117 L1006.2 117 L1002 123 L985.8 123 Z" fill="#dadada"/>
<path d="M989.7 111.5 L1006.6 111.5 L1002 118.8 L985.8 118.8 Z" fill="#3b4453"/>
<path d="M990 112.8 L1006.2 112.8 L1002 118.8 L985.8 118.8 Z" fill="#dadada"/>
<path d="M989.7 107.3 L1006.6 107.3 L1002 114.6 L985.8 114.6 Z" fill="#3b4453"/>
<path d="M990 108.6 L1006.2 108.6 L1002 114.6 L985.8 114.6 Z" fill="#74c4fb"/>
<circle cx="996.1" cy="108.7" r="4" fill="#d0d0d0"/>
<path d="M869.6 143.5 L883.1 143.5 L878.7 151.2 L865.9 151.2 Z" fill="#3b4453"/>
<path d="M869.9 144.8 L882.7 144.8 L878.7 151.2 L865.9 151.2 Z" fill="#dadada"/>
<path d="M869.6 139.2 L883.1 139.2 L878.7 146.9 L865.9 146.9 Z" fill="#3b4453"/>
<path d="M869.9 140.5 L882.7 140.5 L878.7 146.9 L865.9 146.9 Z" fill="#dadada"/>
<path d="M869.6 134.9 L883.1 134.9 L878.7 142.6 L865.9 142.6 Z" fill="#3b4453"/>
<path d="M869.9 136.2 L882.7 136.2 L878.7 142.6 L865.9 142.6 Z" fill="#dadada"/>
<circle cx="882.1" cy="149.2" r="4.8" fill="#3b4453"/>
<circle cx="882.1" cy="149.2" r="4" fill="#fdcf70"/>
<path d="M879.8 153.4 L884.4 153.4 L884.4 154.6 L882.1 156.6 L879.8 154.6 Z" fill="#f4f4f4"/>
<path d="M899.8 143.5 L913.3 143.5 L908.9 151.2 L896.1 151.2 Z" fill="#3b4453"/>
<path d="M900.1 144.8 L912.9 144.8 L908.9 151.2 L896.1 151.2 Z" fill="#74c4fb"/>
<path d="M899.8 139.2 L913.3 139.2 L908.9 146.9 L896.1 146.9 Z" fill="#3b4453"/>
<path d="M900.1 140.5 L912.9 140.5 L908.9 146.9 L896.1 146.9 Z" fill="#dadada"/>
<path d="M899.8 134.9 L913.3 134.9 L908.9 142.6 L896.1 142.6 Z" fill="#3b4453"/>
<path d="M900.1 136.2 L912.9 136.2 L908.9 142.6 L896.1 142.6 Z" fill="#dadada"/>
<line x1="907.4" y1="155.6" x2="912.4" y2="150.2" stroke="#e6e6e6" stroke-width="1.1"/>
<path d="M915.2 147.6 L914.2 152.8 L910.2 149 Z" fill="#f4f4f4"/>
<path d="M929.6 143.5 L943.1 143.5 L938.7 151.2 L925.9 151.2 Z" fill="#3b4453"/>
<path d="M929.9 144.8 L942.7 144.8 L938.7 151.2 L925.9 151.2 Z" fill="#dadada"/>
<path d="M929.6 139.2 L943.1 139.2 L938.7 146.9 L925.9 146.9 Z" fill="#3b4453"/>
<path d="M929.9 140.5 L942.7 140.5 L938.7 146.9 L925.9 146.9 Z" fill="#dadada"/>
<path d="M929.6 134.9 L943.1 134.9 L938.7 142.6 L925.9 142.6 Z" fill="#3b4453"/>
<path d="M929.9 136.2 L942.7 136.2 L938.7 142.6 L925.9 142.6 Z" fill="#dadada"/>
<circle cx="940.1" cy="150" r="6.4" fill="#3b4453"/>
<circle cx="940.1" cy="150" r="3.3" fill="#fdcf70"/>
<rect x="944.6" y="149.1" width="1.8" height="1.8" fill="#fdcf70"/>
<rect x="943.02" y="152.92" width="1.8" height="1.8" fill="#fdcf70"/>
<rect x="939.2" y="154.5" width="1.8" height="1.8" fill="#fdcf70"/>
<rect x="935.38" y="152.92" width="1.8" height="1.8" fill="#fdcf70"/>
<rect x="933.8" y="149.1" width="1.8" height="1.8" fill="#fdcf70"/>
<rect x="935.38" y="145.28" width="1.8" height="1.8" fill="#fdcf70"/>
<rect x="939.2" y="143.7" width="1.8" height="1.8" fill="#fdcf70"/>
<rect x="943.02" y="145.28" width="1.8" height="1.8" fill="#fdcf70"/>
<path d="M960.2 137 L972.8 137 L968.5 143.9 L955.9 143.9 Z" fill="#dadada"/>
<rect x="963.9" y="149" width="9.4" height="7.2" fill="#fdcf70"/>
<path d="M970.3 149 L970.3 147 C970.3 143.2 975.3 143.2 975.3 147 L975.3 148.4" fill="none" stroke="#fdcf70" stroke-width="1.4"/>
<rect x="968" y="151" width="1.2" height="3.2" fill="#3b4453"/>
<path d="M989.5 143.5 L1003 143.5 L998.6 151.2 L985.8 151.2 Z" fill="#3b4453"/>
<path d="M989.8 144.8 L1002.6 144.8 L998.6 151.2 L985.8 151.2 Z" fill="#dadada"/>
<path d="M989.5 139.2 L1003 139.2 L998.6 146.9 L985.8 146.9 Z" fill="#3b4453"/>
<path d="M989.8 140.5 L1002.6 140.5 L998.6 146.9 L985.8 146.9 Z" fill="#dadada"/>
<path d="M989.5 134.9 L1003 134.9 L998.6 142.6 L985.8 142.6 Z" fill="#3b4453"/>
<path d="M989.8 136.2 L1002.6 136.2 L998.6 142.6 L985.8 142.6 Z" fill="#dadada"/>
<path d="M995.6 148.4 L999.2 145.2 L1006 152.6 L1002.4 155.8 Z" fill="#3b4453"/>
<path d="M996.6 149.4 L999.4 146.8 L1004.6 152.6 L1001.8 155.2 Z" fill="#f5c55e"/>
<path d="M999.4 146.8 L1001.6 144.8 L1006.4 150.4 L1004.6 152.6 Z" fill="#f4f4f4"/>
<line x1="1001.4" y1="147.4" x2="1003.4" y2="145.2" stroke="#f4f4f4" stroke-width="1.4"/>
<!-- s_block -->
<path d="M1150 70 L1165.4 70 L1172 76.6 L1172 101 L1150 101 Z" fill="#7cc4fb"/>
<path d="M1165.4 70 L1172 76.6 L1165.4 76.6 Z" fill="#b9e0fd"/>
<rect x="1133.4" y="83.6" width="25.4" height="18" fill="#6d7482" stroke="#b4b8c0" stroke-width="1.1"/>
<circle cx="1158" cy="101" r="8.6" fill="#6d7482" stroke="#cfd1d6" stroke-width="1.1"/>
<path d="M1133.4 101.6 L1158.8 101.6 L1158.8 92.4" fill="none" stroke="#bfc2c8" stroke-width="0.9"/>
<rect x="1132.2" y="100.2" width="2.8" height="2.8" fill="#e6e6e6"/>
<rect x="1181.9" y="80.9" width="11.4" height="9.9" fill="#6d7482" stroke="#c4c7cd" stroke-width="1.1"/>
<circle cx="1193.7" cy="90" r="3.7" fill="#6d7482" stroke="#c4c7cd" stroke-width="1.1"/>
<line x1="1193.7" y1="83" x2="1193.7" y2="90" stroke="#c4c7cd" stroke-width="1"/>
<line x1="1189.7" y1="90.8" x2="1193.7" y2="90.8" stroke="#c4c7cd" stroke-width="0.9"/>
<rect x="1180.8" y="89.6" width="2.4" height="2.4" fill="#e6e6e6"/>
<path d="M1195.6 73.8 L1196.48 77.08 L1199.42 75.38 L1197.72 78.32 L1201 79.2 L1197.72 80.08 L1199.42 83.02 L1196.48 81.32 L1195.6 84.6 L1194.72 81.32 L1191.78 83.02 L1193.48 80.08 L1190.2 79.2 L1193.48 78.32 L1191.78 75.38 L1194.72 77.08 Z" fill="#fdcf70"/>
<rect x="1181.9" y="110.3" width="11.4" height="9.9" fill="#6d7482" stroke="#c4c7cd" stroke-width="1.1"/>
<circle cx="1195.8" cy="119.7" r="3.7" fill="#6d7482" stroke="#c4c7cd" stroke-width="1.1"/>
<line x1="1195.8" y1="112.7" x2="1195.8" y2="119.7" stroke="#c4c7cd" stroke-width="1"/>
<line x1="1191.8" y1="120.5" x2="1195.8" y2="120.5" stroke="#c4c7cd" stroke-width="0.9"/>
<rect x="1180.8" y="119" width="2.4" height="2.4" fill="#e6e6e6"/>
<path d="M1191.4 115.6 L1194.87 114.86 L1192.22 112.14 Z" fill="#d6d6d6"/>
<path d="M1194.87 114.86 L1200.41 109.44 L1197.76 106.72 L1192.22 112.14 Z" fill="#f5c55e"/>
<path d="M1200.41 109.44 L1202.13 107.76 L1199.47 105.04 L1197.76 106.72 Z" fill="#ee4f5e"/>
<path d="M1181.2 137.6 L1188.6 137.6 L1199.6 147.6 L1191.6 156 L1181.2 146.4 Z" fill="#d9d9d9"/>
<circle cx="1184.4" cy="140.8" r="1.1" fill="#3b4453"/>
<line x1="1184.8" y1="145" x2="1190.8" y2="141.6" stroke="#6b7078" stroke-width="0.8"/>
<line x1="1186.8" y1="147.8" x2="1192.8" y2="144.4" stroke="#6b7078" stroke-width="0.8"/>
<line x1="1188.8" y1="150.6" x2="1194.8" y2="147.2" stroke="#6b7078" stroke-width="0.8"/>
<path d="M1190.6 146.6 L1194.06 145.82 L1191.38 143.14 Z" fill="#d6d6d6"/>
<path d="M1194.06 145.82 L1200.25 139.64 L1197.56 136.95 L1191.38 143.14 Z" fill="#f5c55e"/>
<path d="M1200.25 139.64 L1201.94 137.94 L1199.26 135.26 L1197.56 136.95 Z" fill="#ee4f5e"/>
<line x1="1188.8" y1="146" x2="1191.4" y2="148" stroke="#4a4f58" stroke-width="0.9"/>
<!-- s_props -->
<rect x="1246" y="71.8" width="26" height="35.6" fill="#dcdcdc"/>
<rect x="1249.4" y="74.8" width="17" height="13.6" fill="#7cc4fb" stroke="#4a4f58" stroke-width="0.7"/>
<line x1="1251" y1="94.2" x2="1265.4" y2="94.2" stroke="#8a8d92" stroke-width="1"/>
<line x1="1254.2" y1="92.4" x2="1254.2" y2="96" stroke="#5a5d62" stroke-width="1.2"/>
<line x1="1251" y1="100.8" x2="1263" y2="100.8" stroke="#8a8d92" stroke-width="1"/>
<line x1="1262.4" y1="99" x2="1262.4" y2="102.6" stroke="#5a5d62" stroke-width="1.2"/>
<path d="M1264.4 101.6 L1271.8 95.6 L1284.6 106.2 L1276.6 112.2 Z" fill="#3b4453"/>
<path d="M1265.8 101.4 L1271.6 97 L1282.4 106.4 L1276.4 111.2 Z" fill="#fbc866"/>
<path d="M1271.6 97 L1275.4 94 L1285.6 103.6 L1282.4 106.4 Z" fill="#f4f4f4"/>
<path d="M1278.4 96 L1281.2 93.6 L1285.4 97.6 L1282.6 100 Z" fill="#f4f4f4"/>
<path d="M1315 84 L1310 75.34 A10 10 0 0 1 1320 75.34 Z" fill="#fbbf3a"/>
<path d="M1315 84 L1320 75.34 A10 10 0 0 1 1325 84 Z" fill="#f58b3c"/>
<path d="M1315 84 L1325 84 A10 10 0 0 1 1320 92.66 Z" fill="#e4555a"/>
<path d="M1315 84 L1320 92.66 A10 10 0 0 1 1310 92.66 Z" fill="#8c57f0"/>
<path d="M1315 84 L1310 92.66 A10 10 0 0 1 1305 84 Z" fill="#1fb2d8"/>
<path d="M1315 84 L1305 84 A10 10 0 0 1 1310 75.34 Z" fill="#37c77a"/>
<rect x="1305" y="104.8" width="20.2" height="1" fill="#dcdcdc"/>
<rect x="1305" y="108.2" width="20.2" height="2.6" fill="#dcdcdc"/>
<rect x="1305" y="113.6" width="20.2" height="3.8" fill="#dcdcdc"/>
<rect x="1305" y="120.2" width="20.2" height="4.6" fill="#dcdcdc"/>
<rect x="1305.2" y="138.2" width="1.8" height="1" fill="#d0d0d0"/>
<rect x="1308.6" y="138.2" width="1.8" height="1" fill="#d0d0d0"/>
<rect x="1312" y="138.2" width="1.8" height="1" fill="#d0d0d0"/>
<rect x="1315.4" y="138.2" width="1.8" height="1" fill="#d0d0d0"/>
<rect x="1318.8" y="138.2" width="1.8" height="1" fill="#d0d0d0"/>
<rect x="1322.2" y="138.2" width="1.8" height="1" fill="#d0d0d0"/>
<rect x="1305.2" y="141.8" width="4.4" height="1.2" fill="#d0d0d0"/>
<rect x="1310.8" y="141.8" width="3.6" height="1.2" fill="#d0d0d0"/>
<rect x="1315.6" y="141.8" width="3.6" height="1.2" fill="#d0d0d0"/>
<rect x="1320.4" y="141.8" width="4" height="1.2" fill="#d0d0d0"/>
<rect x="1305.2" y="145.4" width="19.2" height="1.2" fill="#d0d0d0"/>
<rect x="1305.2" y="148.8" width="5" height="1.2" fill="#d0d0d0"/>
<rect x="1311.4" y="148.8" width="5" height="1.2" fill="#d0d0d0"/>
<rect x="1317.6" y="148.8" width="2.2" height="1.2" fill="#d0d0d0"/>
<rect x="1321" y="148.8" width="3.4" height="1.2" fill="#d0d0d0"/>
<rect x="1305.2" y="152.2" width="8" height="1.2" fill="#d0d0d0"/>
<rect x="1314" y="152.2" width="3" height="1.2" fill="#d0d0d0"/>
<rect x="1317.8" y="152.2" width="6.6" height="1.2" fill="#d0d0d0"/>
<!-- s_groups -->
<path d="M1514.6 78.6 L1510.2 78.6 L1510.2 111.2 L1514.6 111.2" fill="none" stroke="#e2e2e2" stroke-width="1.2"/>
<path d="M1532.6 111.2 L1536.8 111.2 L1536.8 94" fill="none" stroke="#e2e2e2" stroke-width="1.2"/>
<rect x="1517.4" y="83.8" width="12.4" height="8.6" fill="#48678c" stroke="#6ec1ff" stroke-width="1.2"/>
<circle cx="1523.5" cy="102.4" r="6.2" fill="#6d7482" stroke="#d6d6d6" stroke-width="1.2"/>
<path d="M1538.4 72 L1540.08 78.53 L1545.9 75.1 L1542.47 80.92 L1549 82.6 L1542.47 84.28 L1545.9 90.1 L1540.08 86.67 L1538.4 93.2 L1536.72 86.67 L1530.9 90.1 L1534.33 84.28 L1527.8 82.6 L1534.33 80.92 L1530.9 75.1 L1536.72 78.53 Z" fill="#fdcf70"/>
<rect x="1560.4" y="76.4" width="7" height="5.8" fill="#48678c" stroke="#6ec1ff" stroke-width="1"/>
<circle cx="1564" cy="88" r="3.7" fill="#6d7482" stroke="#c9c9c9" stroke-width="1"/>
<path d="M1570.6 74.4 L1573.6 74.4 L1573.6 79.6" fill="none" stroke="#e2e2e2" stroke-width="1.2"/>
<path d="M1573.6 88.6 L1573.6 93.4 L1570.6 93.4" fill="none" stroke="#e2e2e2" stroke-width="1.2"/>
<line x1="1571.4" y1="81.2" x2="1576.8" y2="87.2" stroke="#f0505e" stroke-width="1.8"/>
<line x1="1576.8" y1="81.2" x2="1571.4" y2="87.2" stroke="#f0505e" stroke-width="1.8"/>
<path d="M1560.8 105.2 L1558.4 105.2 L1558.4 122 L1560.8 122" fill="none" stroke="#e2e2e2" stroke-width="1.2"/>
<path d="M1567.2 105.2 L1569.6 105.2 L1569.6 122 L1567.2 122" fill="none" stroke="#e2e2e2" stroke-width="1.2"/>
<rect x="1561.4" y="107.8" width="5.2" height="4.2" fill="#48678c" stroke="#6ec1ff" stroke-width="1"/>
<circle cx="1564" cy="117" r="2.8" fill="#6d7482" stroke="#c9c9c9" stroke-width="1"/>
<path d="M1567.8 124.8 L1571.36 124.2 L1568.62 121.29 Z" fill="#d6d6d6"/>
<path d="M1571.36 124.2 L1577.22 118.7 L1574.48 115.78 L1568.62 121.29 Z" fill="#f5c55e"/>
<path d="M1577.22 118.7 L1578.97 117.06 L1576.23 114.14 L1574.48 115.78 Z" fill="#ee4f5e"/>
<rect x="1554.4" y="132.6" width="28" height="25.8" fill="#42607f" stroke="#6ec1ff" stroke-width="1.4"/>
<path d="M1562.6 136.6 L1559.8 136.6 L1559.8 152.6 L1562.6 152.6" fill="none" stroke="#e2e2e2" stroke-width="1.2"/>
<path d="M1568.8 136.6 L1571.4 136.6 L1571.4 143" fill="none" stroke="#e2e2e2" stroke-width="1.2"/>
<rect x="1563.2" y="138.8" width="5.2" height="4.4" fill="#3f7a5a" stroke="#4fd07f" stroke-width="1"/>
<circle cx="1565.8" cy="148.4" r="2.9" fill="#3f7a5a" stroke="#4fd07f" stroke-width="1"/>
<path d="M1570.2 145.6 L1570.2 155.99 L1572.75 153.64 L1574.71 157.95 L1576.47 157.16 L1574.51 153.05 L1577.84 152.85 Z" fill="#ffffff" stroke="#42607f" stroke-width="0.6"/>
<!-- s_clip -->
<rect x="1614" y="87.9" width="35.5" height="8" fill="#fdd374"/>
<rect x="1617" y="87.9" width="1" height="2.9" fill="#4a4c50" opacity="0.85"/>
<rect x="1620.73" y="87.9" width="1" height="4" fill="#4a4c50" opacity="0.85"/>
<rect x="1624.47" y="87.9" width="1" height="2.9" fill="#4a4c50" opacity="0.85"/>
<rect x="1628.2" y="87.9" width="1" height="4" fill="#4a4c50" opacity="0.85"/>
<rect x="1631.94" y="87.9" width="1" height="2.9" fill="#4a4c50" opacity="0.85"/>
<rect x="1635.67" y="87.9" width="1" height="4" fill="#4a4c50" opacity="0.85"/>
<rect x="1639.41" y="87.9" width="1" height="2.9" fill="#4a4c50" opacity="0.85"/>
<rect x="1643.14" y="87.9" width="1" height="4" fill="#4a4c50" opacity="0.85"/>
<rect x="1646.88" y="87.9" width="1" height="2.9" fill="#4a4c50" opacity="0.85"/>
<path d="M1689.2 73.9 L1681.7 78.9 L1686.3 79.3 L1684.2 83.9 L1690.9 78.5 L1687.1 77.7 Z" fill="#fdcf70"/>
<rect x="1687.1" y="81.8" width="12.1" height="12.1" fill="#f2f2f2"/>
<rect x="1689" y="85" width="1.2" height="1.2" fill="#2f86e0"/>
<rect x="1691.6" y="85" width="5.2" height="1.2" fill="#5aa2ea"/>
<rect x="1689" y="87.8" width="1.2" height="1.2" fill="#2f86e0"/>
<rect x="1691.6" y="87.8" width="5.2" height="1.2" fill="#5aa2ea"/>
<rect x="1689" y="90.6" width="1.2" height="1.2" fill="#2f86e0"/>
<rect x="1691.6" y="90.6" width="5.2" height="1.2" fill="#5aa2ea"/>
<path d="M1679 80.2 L1679 91.22 L1681.7 88.73 L1683.78 93.3 L1685.66 92.47 L1683.58 88.1 L1687.11 87.9 Z" fill="#ffffff" stroke="#3b4453" stroke-width="0.6"/>
<rect x="1679.5" y="105.5" width="17.2" height="17.2" fill="#2f6f55" stroke="#4fd07f" stroke-width="1" stroke-dasharray="2.4 1.2"/>
<rect x="1685" y="107.3" width="10" height="9.6" fill="#6fd39a"/>
<rect x="1680.6" y="110.4" width="11.4" height="10.8" fill="#2f6f55"/>
<rect x="1681.3" y="111.1" width="10" height="9.5" fill="#6fd39a"/>
<path d="M1690.9 114 L1690.9 124.6 L1693.5 122.2 L1695.5 126.6 L1697.3 125.8 L1695.3 121.6 L1698.7 121.4 Z" fill="#ffffff" stroke="#3b4453" stroke-width="0.6"/>
<rect x="1681" y="136.2" width="14.8" height="19.6" fill="#d9d9d9"/>
<rect x="1683.2" y="138.4" width="10.4" height="4" fill="#7a7d84"/>
<rect x="1683.2" y="145" width="2.6" height="2" fill="#6a6d74"/>
<rect x="1687" y="145" width="2.6" height="2" fill="#6a6d74"/>
<rect x="1690.8" y="145" width="2.6" height="2" fill="#6a6d74"/>
<rect x="1683.2" y="148.4" width="2.6" height="2" fill="#6a6d74"/>
<rect x="1687" y="148.4" width="2.6" height="2" fill="#6a6d74"/>
<rect x="1690.8" y="148.4" width="2.6" height="2" fill="#6a6d74"/>
<rect x="1683.2" y="151.8" width="2.6" height="2" fill="#6a6d74"/>
<rect x="1687" y="151.8" width="2.6" height="2" fill="#6a6d74"/>
<rect x="1690.8" y="151.8" width="2.6" height="2" fill="#6a6d74"/>
<rect x="1725.8" y="76.8" width="28.2" height="31.4" fill="#dcae78"/>
<path d="M1733 78.4 L1733 76.4 L1735.6 76.4 C1736 71.4 1743.2 71.4 1743.6 76.4 L1746.2 76.4 L1746.2 78.4 Z" fill="#f4f4f4"/>
<path d="M1734.2 85 L1750.6 85 L1758.4 92.8 L1758.4 113.6 L1734.2 113.6 Z" fill="#3b4453"/>
<path d="M1735 85.8 L1750.2 85.8 L1757.8 93.4 L1757.8 113 L1735 113 Z" fill="#dcdcdc"/>
<path d="M1750.2 85.8 L1757.8 93.4 L1750.2 93.4 Z" fill="#f6f6f6"/>
<rect x="1777.8" y="74.2" width="14.8" height="17.2" fill="#d6d6d6"/>
<line x1="1780" y1="77.4" x2="1789.4" y2="77.4" stroke="#8a8d92" stroke-width="0.9"/>
<line x1="1780" y1="80.8" x2="1789.4" y2="80.8" stroke="#8a8d92" stroke-width="0.9"/>
<line x1="1780" y1="84.2" x2="1786" y2="84.2" stroke="#8a8d92" stroke-width="0.9"/>
<line x1="1780" y1="87.6" x2="1786" y2="87.6" stroke="#8a8d92" stroke-width="0.9"/>
<line x1="1786.4" y1="80.6" x2="1795.2" y2="91.2" stroke="#f4f4f4" stroke-width="1.5"/>
<line x1="1797.4" y1="81.6" x2="1789.2" y2="91.2" stroke="#f4f4f4" stroke-width="1.5"/>
<line x1="1786.4" y1="80.6" x2="1795.2" y2="91.2" stroke="#3b4453" stroke-width="0.3"/>
<circle cx="1789.4" cy="92.2" r="1.9" fill="none" stroke="#f4f4f4" stroke-width="1.1"/>
<circle cx="1795.4" cy="92.2" r="1.9" fill="none" stroke="#f4f4f4" stroke-width="1.1"/>
<path d="M1779.8 104.8 L1788.6 104.8 L1791.6 107.8 L1791.6 121 L1779.8 121 Z" fill="#cfcfcf"/>
<path d="M1783 108 L1792.2 108 L1796.6 112.4 L1796.6 125.2 L1783 125.2 Z" fill="#3b4453"/>
<path d="M1783.8 108.8 L1791.8 108.8 L1796 113 L1796 124.8 L1783.8 124.8 Z" fill="#dcdcdc"/>
<path d="M1791.8 108.8 L1796 113 L1791.8 113 Z" fill="#f6f6f6"/>
<path d="M1842 76.8 L1859.2 76.8 L1859.2 89.8 L1882.2 89.8 L1882.2 107 L1842 107 Z" fill="#dcdcdc"/>
<!-- s_view -->
<line x1="26.6" y1="196.3" x2="18.6" y2="215.8" stroke="#4a5262" stroke-width="1.2"/>
<text x="36.31" y="212" font-size="16" fill="#f0f0f0" textLength="31.9" lengthAdjust="spacingAndGlyphs">Start</text>
<text x="98.25" y="212" font-size="16" fill="#ffffff" textLength="141.54" lengthAdjust="spacingAndGlyphs" font-weight="bold">figuras_geometricas</text>
<line x1="250.8" y1="201.8" x2="259.6" y2="210.6" stroke="#b4b8bf" stroke-width="1.8"/>
<line x1="259.6" y1="201.8" x2="250.8" y2="210.6" stroke="#b4b8bf" stroke-width="1.8"/>
<rect x="286.8" y="205.2" width="14.6" height="2" fill="#f4f4f4"/>
<rect x="293.1" y="198.8" width="2" height="14.8" fill="#f4f4f4"/>
<line x1="323" y1="196.3" x2="315.5" y2="215.8" stroke="#4a5262" stroke-width="1.2"/>
<text x="8.3" y="247" font-size="16" fill="#dedede" textLength="22.4" lengthAdjust="spacingAndGlyphs">[−]</text>
<text x="30.75" y="247" font-size="16" fill="#dedede" textLength="33.6" lengthAdjust="spacingAndGlyphs">[Top]</text>
<text x="64.42" y="247" font-size="16" fill="#dedede" textLength="101.55" lengthAdjust="spacingAndGlyphs">[2D Wireframe]</text>
<rect x="1838.8" y="245" width="13.5" height="4" fill="#eaeaea"/>
<rect x="1867" y="236.9" width="10.3" height="10.4" fill="#eaeaea"/>
<rect x="1868.6" y="239.6" width="6.3" height="6" fill="#212830"/>
<rect x="1863" y="239.4" width="12" height="11.4" fill="#212830"/>
<rect x="1863.7" y="240.1" width="10.5" height="10" fill="#eaeaea"/>
<rect x="1867.1" y="242.3" width="4.7" height="4.5" fill="#212830"/>
<path d="M1888.5 238.6 L1892.2 238.6 L1894.9 241.8 L1897.6 238.6 L1901.2 238.6 L1896.9 243.7 L1901.2 248.8 L1897.6 248.8 L1894.9 245.6 L1892.2 248.8 L1888.5 248.8 L1892.8 243.7 Z" fill="#f2f2f2"/>
<line x1="932.5" y1="239.4" x2="932.5" y2="336" stroke="#ee12ee" stroke-width="1.1"/>
<line x1="884.2" y1="287.5" x2="981" y2="287.5" stroke="#ee12ee" stroke-width="1.1"/>
<rect x="930.5" y="284.5" width="4" height="6" fill="#212830" stroke="#ee12ee" stroke-width="1.1"/>
<line x1="831.9" y1="514.5" x2="831.9" y2="847.5" stroke="#7c2023" stroke-width="1.3"/>
<line x1="1165.6" y1="514.5" x2="1165.6" y2="847.5" stroke="#7c2023" stroke-width="1.3"/>
<line x1="761.6" y1="514.5" x2="761.6" y2="847.5" stroke="#0808f0" stroke-width="1.3"/>
<line x1="1233.05" y1="514.5" x2="1233.05" y2="847.5" stroke="#1010d8" stroke-width="1.5"/>
<path d="M998.7 397.4 L1268 592.7 L1165.6 910.4 L831.9 910.4 L729.3 592.7 Z" fill="none" stroke="#08e2e6" stroke-width="1.3" stroke-linejoin="miter"/>
<circle cx="998.75" cy="680.95" r="166.75" fill="none" stroke="#e8e808" stroke-width="1.3"/>
<path d="M998.7 488.4 L1165.8 777.45 L831.7 777.45 Z" fill="none" stroke="#08e808" stroke-width="1.3" stroke-linejoin="miter"/>
<rect x="729" y="514.35" width="539.5" height="333.2" fill="none" stroke="#e80ee8" stroke-width="1.3"/>
<line x1="831.9" y1="785.8" x2="831.9" y2="847.5" stroke="#e4b8ba" stroke-width="1.3"/>
<line x1="831.9" y1="847.55" x2="893.9" y2="847.55" stroke="#f4baf4" stroke-width="1.3"/>
<rect x="827" y="841.7" width="11.4" height="11.4" fill="none" stroke="#e6e6e6" stroke-width="1.3"/>
<path d="M833.9 766.6 L840.9 773.4 L848.1 766.8" fill="none" stroke="#e6e6e6" stroke-width="1.4"/>
<line x1="840.9" y1="773.4" x2="840.9" y2="780.8" stroke="#e6e6e6" stroke-width="1.5"/>
<line x1="898.8" y1="831.4" x2="913.6" y2="845.9" stroke="#e6e6e6" stroke-width="1.4"/>
<line x1="913.6" y1="831.4" x2="898.8" y2="845.9" stroke="#e6e6e6" stroke-width="1.4"/>
<circle cx="1813.2" cy="355" r="65.3" fill="none" stroke="#484d57" stroke-width="16.8"/>
<rect x="1781.2" y="323.7" width="63.5" height="63.1" fill="#b9babd"/>
<rect x="1793" y="335.2" width="40" height="39.6" fill="#a9acb3"/>
<text x="1800.26" y="361.1" font-size="17.6" fill="#4f5462" textLength="26.08" lengthAdjust="spacingAndGlyphs" font-weight="bold" stroke="#4f5462" stroke-width="0.5">TOP</text>
<text x="1803.11" y="296.4" font-size="26" fill="#b6b6b8" textLength="19.29" lengthAdjust="spacingAndGlyphs" font-weight="bold" stroke="#b6b6b8" stroke-width="0.9">N</text>
<text x="1804.12" y="434.4" font-size="26" fill="#b6b6b8" textLength="18.04" lengthAdjust="spacingAndGlyphs" font-weight="bold" stroke="#b6b6b8" stroke-width="0.9">S</text>
<text x="1732.07" y="365.1" font-size="26" fill="#b6b6b8" textLength="24.95" lengthAdjust="spacingAndGlyphs" font-weight="bold" stroke="#b6b6b8" stroke-width="0.9">W</text>
<text x="1872.9" y="365.1" font-size="26" fill="#b6b6b8" textLength="17.95" lengthAdjust="spacingAndGlyphs" font-weight="bold" stroke="#b6b6b8" stroke-width="0.9">E</text>
<rect x="1784.1" y="462.8" width="56.2" height="19.6" fill="#a2a4b4" stroke="#8e90a2" stroke-width="1" rx="4.5"/>
<text x="1789.24" y="476.4" font-size="12.6" fill="#62667a" textLength="29.33" lengthAdjust="spacingAndGlyphs">WCS</text>
<path d="M1826 469.6 L1835 469.6 L1830.5 475.2 Z" fill="#a9abbb" stroke="#cfd1dc" stroke-width="1"/>
<rect x="1871" y="512.8" width="40" height="259" fill="#585c62" rx="4"/>
<line x1="1874" y1="513.4" x2="1908" y2="513.4" stroke="#63676e" stroke-width="1"/>
<line x1="1871.5" y1="516" x2="1871.5" y2="768" stroke="#5d6168" stroke-width="1"/>
<circle cx="1903.6" cy="518.9" r="4.3" fill="#4d5159"/>
<line x1="1901.8" y1="517.1" x2="1905.4" y2="520.7" stroke="#666a71" stroke-width="1.2"/>
<line x1="1905.4" y1="517.1" x2="1901.8" y2="520.7" stroke="#666a71" stroke-width="1.2"/>
<circle cx="1903.6" cy="765" r="4.3" fill="#4d5159"/>
<line x1="1901.4" y1="765" x2="1905.8" y2="765" stroke="#666a71" stroke-width="1.4"/>
<path d="M1877.4 548.6 C1877.4 540 1883 536 1890.6 536 L1903.8 536 L1903.8 548.6 C1903.8 557 1898 561.4 1890.6 561.4 C1883 561.4 1877.4 557 1877.4 548.6 Z" fill="#52565c" stroke="#4a4e55" stroke-width="1.6"/>
<circle cx="1890.6" cy="548.6" r="8.6" fill="#585c62" stroke="#4a4e55" stroke-width="1.5"/>
<circle cx="1890.6" cy="546.8" r="4.6" fill="#52565c" stroke="#4a4e55" stroke-width="1.2"/>
<path d="M1883.4 554.2 C1886 550.4 1895.2 550.4 1897.8 554.2" fill="none" stroke="#4a4e55" stroke-width="1.3"/>
<path d="M1888.5 573 L1893.5 573 L1891 575.6 Z" fill="#4a4e55"/>
<line x1="1873" y1="581.8" x2="1909" y2="581.8" stroke="#60646a" stroke-width="1"/>
<path d="M1879 602 C1877 598.6 1880 597 1882.4 599.6 L1885.6 603.6 L1884.6 592 C1884.4 589 1887.6 589 1888 592 L1888.8 599.4 L1889.4 589.6 C1889.6 586.6 1892.8 586.8 1892.8 589.8 L1892.8 599.6 L1894.8 591.4 C1895.4 588.6 1898.4 589.4 1898 592.2 L1896.8 601 L1899.8 595.6 C1901 593.2 1903.6 594.6 1902.6 597 C1900.6 602.4 1899.6 606.6 1896.6 611.6 L1885.6 611.6 C1883 608.6 1881 605.4 1879 602 Z" fill="#52565c" stroke="#4a4e55" stroke-width="1.4" stroke-linejoin="round"/>
<line x1="1877" y1="623.6" x2="1895" y2="639.6" stroke="#4a4e55" stroke-width="1.4"/>
<line x1="1895" y1="623.6" x2="1877" y2="639.6" stroke="#4a4e55" stroke-width="1.4"/>
<path d="M1876.2 622.8 L1881.2 622.8 L1876.2 627.8 Z" fill="#4a4e55"/>
<path d="M1895.8 622.8 L1890.8 622.8 L1895.8 627.8 Z" fill="#4a4e55"/>
<path d="M1876.2 640.4 L1881.2 640.4 L1876.2 635.4 Z" fill="#4a4e55"/>
<circle cx="1896.6" cy="640.6" r="5" fill="#52565c" stroke="#4a4e55" stroke-width="1.5"/>
<line x1="1900" y1="644.4" x2="1904.6" y2="649" stroke="#4a4e55" stroke-width="2.6"/>
<path d="M1888.5 659.4 L1893.5 659.4 L1891 662 Z" fill="#4a4e55"/>
<path d="M1887.8 696 L1887.8 675.6 L1885 675.6 L1890.4 668.2 L1895.8 675.6 L1893 675.6 L1893 696 Z" fill="#52565c" stroke="#4a4e55" stroke-width="1.3"/>
<path d="M1893.6 681.4 C1900 682.2 1903.8 684 1903.8 686 C1903.8 689.4 1897.6 691.6 1890.4 691.6 C1885 691.6 1881.6 691 1879.8 689.8" fill="none" stroke="#4a4e55" stroke-width="1.3"/>
<path d="M1887.2 681.4 C1881 682.2 1877.2 684 1877.2 686 C1877.2 687.4 1878.2 688.6 1880 689.6" fill="none" stroke="#4a4e55" stroke-width="1.3"/>
<path d="M1878.6 690.4 L1884.4 687 L1884.4 693.6 Z" fill="#4a4e55"/>
<path d="M1888.5 706.6 L1893.5 706.6 L1891 709.2 Z" fill="#4a4e55"/>
<line x1="1873" y1="716.4" x2="1909" y2="716.4" stroke="#60646a" stroke-width="1"/>
<rect x="1877" y="721.6" width="7.2" height="7" fill="none" stroke="#4a4e55" stroke-width="1.2"/>
<rect x="1887" y="721.6" width="7.2" height="7" fill="none" stroke="#4a4e55" stroke-width="1.2"/>
<rect x="1897" y="721.6" width="7.2" height="7" fill="none" stroke="#4a4e55" stroke-width="1.2"/>
<rect x="1877" y="733.4" width="18.8" height="14.6" fill="none" stroke="#4a4e55" stroke-width="1.3"/>
<path d="M1882.6 736.4 L1890.6 740.6 L1882.6 745 Z" fill="#4a4e55"/>
<path d="M389.2 1095 L389.2 1064.4 Q389.2 1061.4 392.2 1061.4 L462 1061.4 L462 1095 Z" fill="#2a303c"/>
<rect x="393.9" y="1067.1" width="2.2" height="2.1" fill="#e0e0e0"/>
<rect x="398" y="1067.1" width="2.2" height="2.1" fill="#e0e0e0"/>
<rect x="393.9" y="1071" width="2.2" height="2.1" fill="#e0e0e0"/>
<rect x="398" y="1071" width="2.2" height="2.1" fill="#e0e0e0"/>
<rect x="393.9" y="1074.9" width="2.2" height="2.1" fill="#e0e0e0"/>
<rect x="398" y="1074.9" width="2.2" height="2.1" fill="#e0e0e0"/>
<rect x="393.9" y="1078.1" width="2.2" height="2.1" fill="#e0e0e0"/>
<rect x="398" y="1078.1" width="2.2" height="2.1" fill="#e0e0e0"/>
<rect x="393.9" y="1082" width="2.2" height="2.1" fill="#e0e0e0"/>
<rect x="398" y="1082" width="2.2" height="2.1" fill="#e0e0e0"/>
<rect x="393.9" y="1086" width="2.2" height="2.1" fill="#e0e0e0"/>
<rect x="398" y="1086" width="2.2" height="2.1" fill="#e0e0e0"/>
<line x1="409" y1="1071.2" x2="419.2" y2="1081.4" stroke="#cacaca" stroke-width="2.3"/>
<line x1="419.2" y1="1071.2" x2="409" y2="1081.4" stroke="#cacaca" stroke-width="2.3"/>
<line x1="437.6" y1="1084.8" x2="447.4" y2="1075.4" stroke="#b6b6b8" stroke-width="3" stroke-linecap="round"/>
<path d="M453.4 1068.2 A4.9 4.9 0 1 0 455 1074.2 L451.2 1074.8 L449.2 1071.6 Z" fill="#b6b6b8"/>
<rect x="461" y="1062" width="1069" height="32" fill="#c1c1c3" rx="2.4"/>
<rect x="466.5" y="1070.8" width="19" height="13.8" fill="#b5b5b7" stroke="#58585a" stroke-width="1"/>
<rect x="466" y="1070.3" width="20" height="3.4" fill="#4a4a4c"/>
<rect x="467.6" y="1071.2" width="1.2" height="1.4" fill="#e0e0e0"/>
<path d="M468 1076.8 L471 1078.6 L468 1080.4" fill="none" stroke="#4a4a4c" stroke-width="0.8"/>
<line x1="472" y1="1081" x2="476.6" y2="1081" stroke="#4a4a4c" stroke-width="0.9"/>
<path d="M488.3 1076.1 L498 1076.1 L493.15 1081 Z" fill="#4a4a4c"/>
<text x="505.52" y="1082.6" font-size="14.2" fill="#6a6c72" textLength="125.5" lengthAdjust="spacingAndGlyphs" font-style="italic" font-family='"Liberation Mono", monospace'>Type a command</text>
<path d="M1514.6 1080.6 L1523.4 1080.6 L1519 1075.6 Z" fill="#4a4a4c"/>
<text x="36.33" y="1121" font-size="16" fill="#ffffff" textLength="46.2" lengthAdjust="spacingAndGlyphs" font-weight="bold">Model</text>
<text x="109.88" y="1121" font-size="16" fill="#f0f0f0" textLength="52.74" lengthAdjust="spacingAndGlyphs">Layout1</text>
<text x="192.17" y="1121" font-size="16" fill="#f0f0f0" textLength="53.39" lengthAdjust="spacingAndGlyphs">Layout2</text>
<line x1="181.7" y1="1105.6" x2="174.6" y2="1124.6" stroke="#4a5262" stroke-width="1.2"/>
<line x1="263.8" y1="1105.6" x2="256.5" y2="1124.6" stroke="#4a5262" stroke-width="1.2"/>
<line x1="313.8" y1="1105.6" x2="306.7" y2="1124.6" stroke="#4a5262" stroke-width="1.2"/>
<rect x="277.4" y="1114" width="15.1" height="2" fill="#f4f4f4"/>
<rect x="284" y="1107.6" width="2" height="14.8" fill="#f4f4f4"/>
<!-- s_status -->
<rect x="1138" y="1102" width="59" height="30" fill="#3b4453"/>
<rect x="1200" y="1102" width="80.2" height="30" fill="#3b4453"/>
<rect x="1283" y="1102" width="30" height="30" fill="#3b4453"/>
<rect x="1314.2" y="1102" width="129.8" height="30" fill="#3b4453"/>
<rect x="1445.4" y="1102" width="79.4" height="30" fill="#3b4453"/>
<rect x="1528" y="1102" width="132.2" height="30" fill="#3b4453"/>
<rect x="1663" y="1102" width="81.2" height="30" fill="#3b4453"/>
<rect x="1747" y="1102" width="31.2" height="30" fill="#3b4453"/>
<rect x="1781" y="1102" width="68.2" height="30" fill="#3b4453"/>
<rect x="1852" y="1102" width="60" height="30" fill="#3b4453"/>
<text x="1141.39" y="1123" font-size="16" fill="#f6f6f6" textLength="52.29" lengthAdjust="spacingAndGlyphs">MODEL</text>
<line x1="1209.8" y1="1107" x2="1209.8" y2="1126.2" stroke="#f0f0f0" stroke-width="1.2"/>
<line x1="1214.7" y1="1107" x2="1214.7" y2="1126.2" stroke="#f0f0f0" stroke-width="1.2"/>
<line x1="1219.5" y1="1107" x2="1219.5" y2="1126.2" stroke="#f0f0f0" stroke-width="1.2"/>
<line x1="1205" y1="1111.6" x2="1224.2" y2="1111.6" stroke="#f0f0f0" stroke-width="1.2"/>
<line x1="1205" y1="1116.5" x2="1224.2" y2="1116.5" stroke="#f0f0f0" stroke-width="1.2"/>
<line x1="1205" y1="1121.3" x2="1224.2" y2="1121.3" stroke="#f0f0f0" stroke-width="1.2"/>
<rect x="1237" y="1109.2" width="2.8" height="2.8" fill="#e6e6e6"/>
<rect x="1237" y="1115.1" width="2.8" height="2.8" fill="#e6e6e6"/>
<rect x="1237" y="1121" width="2.8" height="2.8" fill="#e6e6e6"/>
<rect x="1243.1" y="1109.2" width="2.8" height="2.8" fill="#e6e6e6"/>
<rect x="1243.1" y="1115.1" width="2.8" height="2.8" fill="#e6e6e6"/>
<rect x="1243.1" y="1121" width="2.8" height="2.8" fill="#e6e6e6"/>
<rect x="1249" y="1109.2" width="2.8" height="2.8" fill="#e6e6e6"/>
<rect x="1249" y="1115.1" width="2.8" height="2.8" fill="#e6e6e6"/>
<rect x="1249" y="1121" width="2.8" height="2.8" fill="#e6e6e6"/>
<path d="M1264.8 1113.9 L1275 1113.9 L1269.9 1119 Z" fill="#dcdcdc"/>
<line x1="1288" y1="1113.9" x2="1296.8" y2="1113.9" stroke="#dcdcdc" stroke-width="1.2"/>
<line x1="1292.6" y1="1109" x2="1292.6" y2="1118.4" stroke="#dcdcdc" stroke-width="1.2"/>
<rect x="1295.2" y="1119.2" width="12.8" height="5.2" fill="#f0f0f0"/>
<rect x="1295.2" y="1119.2" width="2.2" height="5.2" fill="#6a6f78"/>
<rect x="1295.9" y="1119.9" width="0.9" height="3.8" fill="#f0f0f0"/>
<path d="M1319.6 1107.2 L1319.6 1126.2 L1338.8 1126.2" fill="none" stroke="#f0f0f0" stroke-width="1.2"/>
<path d="M1319.6 1121 L1325 1121 L1325 1126.2" fill="none" stroke="#f0f0f0" stroke-width="1"/>
<rect x="1345" y="1102.9" width="28" height="27.7" fill="#5e8fc5"/>
<circle cx="1356.8" cy="1117.3" r="7.6" fill="none" stroke="#f0f0f0" stroke-width="1.2"/>
<path d="M1368.8 1117.3 L1357.2 1117.3 L1365.4 1108.2" fill="none" stroke="#f0f0f0" stroke-width="1.2"/>
<path d="M1379 1114 L1389 1114 L1384 1119.2 Z" fill="#dcdcdc"/>
<line x1="1401.2" y1="1108" x2="1416.2" y2="1123.6" stroke="#d8474e" stroke-width="1.2"/>
<line x1="1409.4" y1="1106.9" x2="1409.4" y2="1124.8" stroke="#3fd06a" stroke-width="1.2"/>
<rect x="1407.6" y="1114.4" width="3.6" height="3.6" fill="#3b4453" stroke="#f0f0f0" stroke-width="0.9"/>
<path d="M1429 1114 L1439 1114 L1434 1119.2 Z" fill="#dcdcdc"/>
<rect x="1446" y="1102.9" width="27.8" height="27.7" fill="#5e8fc5"/>
<line x1="1450.4" y1="1123.8" x2="1469.8" y2="1123.8" stroke="#dbe6f2" stroke-width="1.6"/>
<line x1="1450.8" y1="1123.6" x2="1465" y2="1109.2" stroke="#f0f0f0" stroke-width="1.2"/>
<rect x="1455.8" y="1114.8" width="3.4" height="3.4" fill="#f0f0f0"/>
<rect x="1476" y="1102.9" width="28" height="27.7" fill="#5e8fc5"/>
<rect x="1482.6" y="1110" width="16.6" height="16.2" fill="none" stroke="#f0f0f0" stroke-width="1.3"/>
<rect x="1480.4" y="1107.6" width="5" height="4.8" fill="#5e8fc5" stroke="#f0f0f0" stroke-width="1.1"/>
<path d="M1509.8 1114 L1520 1114 L1514.9 1119.2 Z" fill="#dcdcdc"/>
<rect x="1529" y="1102.9" width="28" height="27.7" fill="#5e8fc5"/>
<path d="M1541.4 1106.7 L1544.9 1115.6 L1543.3 1117.5 L1546.4 1119.1 L1550 1127.1 L1543.6 1124 L1541.4 1121.9 L1539.2 1124 L1532.8 1127.1 L1536.4 1119.1 L1539.5 1117.5 L1537.9 1115.6 Z" fill="#ffffff"/>
<circle cx="1549.3" cy="1111.4" r="3.2" fill="none" stroke="#ffffff" stroke-width="1"/>
<path d="M1571.4 1106.7 L1574.9 1115.6 L1573.3 1117.5 L1576.4 1119.1 L1580 1127.1 L1573.6 1124 L1571.4 1121.9 L1569.2 1124 L1562.8 1127.1 L1566.4 1119.1 L1569.5 1117.5 L1567.9 1115.6 Z" fill="#dcdcdc"/>
<path d="M1581 1107 L1575.5 1111.6 L1578.3 1111.9 L1576.1 1116.9 L1582.1 1112.2 L1579.9 1110.9 Z" fill="#dcdcdc"/>
<path d="M1602.4 1106.7 L1605.9 1115.6 L1604.3 1117.5 L1607.4 1119.1 L1611 1127.1 L1604.6 1124 L1602.4 1121.9 L1600.2 1124 L1593.8 1127.1 L1597.4 1119.1 L1600.5 1117.5 L1598.9 1115.6 Z" fill="#dcdcdc"/>
<text x="1623.5" y="1123" font-size="16" fill="#f6f6f6" textLength="16.48" lengthAdjust="spacingAndGlyphs">1:1</text>
<path d="M1645.3 1114 L1655.2 1114 L1650.25 1119.2 Z" fill="#dcdcdc"/>
<path d="M1684 1119.2 L1688 1118.8 L1688 1115 L1684 1114.6 Z" fill="#d9d9d9"/>
<path d="M1680.62 1122.77 L1683.73 1125.31 L1686.41 1122.63 L1683.87 1119.52 Z" fill="#d9d9d9"/>
<path d="M1675.7 1122.9 L1676.1 1126.9 L1679.9 1126.9 L1680.3 1122.9 Z" fill="#d9d9d9"/>
<path d="M1672.13 1119.52 L1669.59 1122.63 L1672.27 1125.31 L1675.38 1122.77 Z" fill="#d9d9d9"/>
<path d="M1672 1114.6 L1668 1115 L1668 1118.8 L1672 1119.2 Z" fill="#d9d9d9"/>
<path d="M1675.38 1111.03 L1672.27 1108.49 L1669.59 1111.17 L1672.13 1114.28 Z" fill="#d9d9d9"/>
<path d="M1680.3 1110.9 L1679.9 1106.9 L1676.1 1106.9 L1675.7 1110.9 Z" fill="#d9d9d9"/>
<path d="M1683.87 1114.28 L1686.41 1111.17 L1683.73 1108.49 L1680.62 1111.03 Z" fill="#d9d9d9"/>
<circle cx="1678" cy="1116.9" r="5.6" fill="none" stroke="#d9d9d9" stroke-width="4.4"/>
<path d="M1698 1114 L1708 1114 L1703 1119.2 Z" fill="#dcdcdc"/>
<line x1="1713.4" y1="1102" x2="1713.4" y2="1132" stroke="#222933" stroke-width="1"/>
<rect x="1718.8" y="1115.4" width="19.4" height="2.4" fill="#e6e6e6"/>
<rect x="1727.3" y="1106.8" width="2.4" height="19.4" fill="#e6e6e6"/>
<rect x="1752.8" y="1107.6" width="6.6" height="6.6" fill="none" stroke="#dcdcdc" stroke-width="1.1"/>
<circle cx="1767.4" cy="1115.6" r="4.1" fill="none" stroke="#dcdcdc" stroke-width="1.1"/>
<path d="M1759.9 1119.8 L1764.4 1126.4 L1755.4 1126.4 Z" fill="none" stroke="#dcdcdc" stroke-width="1.1"/>
<path d="M1785 1104.4 L1800.4 1104.4 L1805.4 1109 L1805.4 1120 L1785 1120 Z" fill="#3b74ba"/>
<path d="M1800.4 1104.4 L1805.4 1109 L1800.4 1109 Z" fill="#7fb2e8"/>
<line x1="1790.4" y1="1104.4" x2="1790.4" y2="1118.6" stroke="#ffffff" stroke-width="1.2"/>
<line x1="1785" y1="1109.6" x2="1798" y2="1109.6" stroke="#ffffff" stroke-width="1.2"/>
<circle cx="1790.4" cy="1109.6" r="1.6" fill="#3b74ba" stroke="#ffffff" stroke-width="0.9"/>
<path d="M1785 1118.4 L1795.4 1118.4 L1793.8 1122 L1795.4 1125.6 L1785 1125.6 Z" fill="#f5b623"/>
<path d="M1795.6 1122.2 L1799.8 1126.8 L1808.8 1118" fill="none" stroke="#3db04e" stroke-width="2.6"/>
<path d="M1822.4 1113.6 A8.6 8.6 0 1 1 1838.8 1119.4" fill="none" stroke="#d6d6d6" stroke-width="1.2"/>
<path d="M1820 1110.2 L1824.6 1111.4 L1821.6 1114.8 Z" fill="#d6d6d6"/>
<path d="M1830.6 1110.4 L1830.6 1116.4 L1834.6 1116.4" fill="none" stroke="#e6e6e6" stroke-width="1.1"/>
<path d="M1819 1115.4 L1825.6 1115.4 L1828.6 1118.4 L1828.6 1127 L1819 1127 Z" fill="#f0f0f0"/>
<rect x="1820" y="1116.6" width="7.6" height="6.4" fill="#3b74ba"/>
<rect x="1820" y="1123" width="7.6" height="3" fill="#f5b623"/>
<line x1="1821.8" y1="1116.6" x2="1821.8" y2="1122" stroke="#ffffff" stroke-width="0.8"/>
<line x1="1820" y1="1118.6" x2="1825" y2="1118.6" stroke="#ffffff" stroke-width="0.8"/>
<circle cx="1834.6" cy="1123.2" r="4.2" fill="#55b2ee"/>
<rect x="1834.1" y="1122.4" width="1" height="3.2" fill="#ffffff"/>
<rect x="1834.1" y="1120.6" width="1" height="1" fill="#ffffff"/>
<rect x="1857.6" y="1109.8" width="18.8" height="13.4" fill="none" stroke="#d6d6d6" stroke-width="1.1"/>
<line x1="1868.4" y1="1114.8" x2="1872" y2="1111.6" stroke="#d6d6d6" stroke-width="1.1"/>
<path d="M1869.6 1111 L1873.2 1111 L1873.2 1114.6 Z" fill="#d6d6d6"/>
<line x1="1864" y1="1118.4" x2="1860.6" y2="1121.4" stroke="#d6d6d6" stroke-width="1.1"/>
<path d="M1859.6 1118.4 L1859.6 1122 L1863.2 1122 Z" fill="#d6d6d6"/>
<rect x="1887" y="1108" width="20" height="2.2" fill="#f0f0f0"/>
<rect x="1887" y="1115.2" width="20" height="2.8" fill="#dcdcdc"/>
<rect x="1887" y="1123" width="20" height="2.1" fill="#f0f0f0"/>
</svg>
</body></html>
